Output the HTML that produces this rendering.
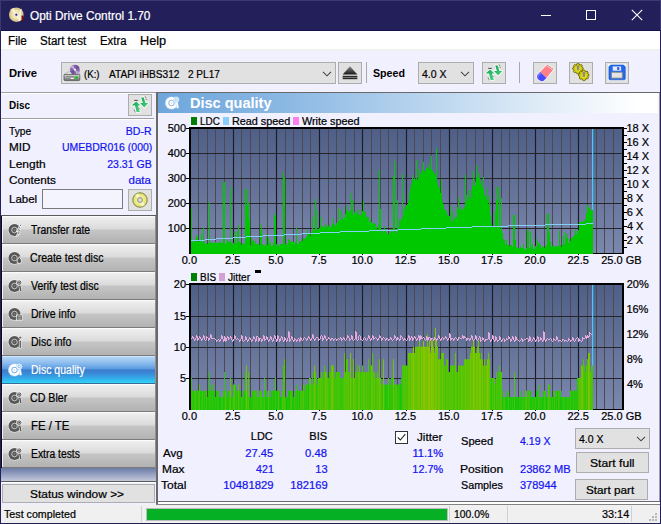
<!DOCTYPE html>
<html><head><meta charset="utf-8"><title>Opti Drive Control 1.70</title>
<style>
html,body{margin:0;padding:0;overflow:hidden;}
body{width:661px;height:524px;position:relative;overflow:hidden;background:#f0f0ff;font-family:"Liberation Sans",sans-serif;font-size:12px;}
div{box-sizing:border-box;}
svg{position:absolute;overflow:visible;}
</style></head><body>
<div style="position:absolute;left:0px;top:0px;width:661px;height:31px;background:#221f5b;"></div>
<div style="position:absolute;left:0px;top:0px;width:661px;height:1px;background:#3b3870;"></div>
<div style="position:absolute;left:0px;top:30px;width:661px;height:1px;background:#16124e;"></div>
<div style="position:absolute;left:660px;top:0px;width:1px;height:30px;background:#3b3870;"></div>
<div style="position:absolute;left:0px;top:0px;width:1px;height:31px;background:#3b3870;"></div>
<div style="position:absolute;left:0px;top:31px;width:1px;height:493px;background:#221f5b;"></div>
<div style="position:absolute;left:660px;top:31px;width:1px;height:493px;background:#221f5b;"></div>
<div style="position:absolute;left:0px;top:523px;width:661px;height:1px;background:#221f5b;"></div>
<div style="position:absolute;left:659px;top:93px;width:1px;height:412px;background:#a0a0a0;"></div>
<svg style="left:8px;top:6px" width="18" height="18" viewBox="0 0 18 18">
<defs><radialGradient id="tg" cx="50%" cy="50%" r="50%"><stop offset="0" stop-color="#fffbe0"/><stop offset="0.55" stop-color="#efe2a8"/><stop offset="1" stop-color="#cdbb82"/></radialGradient></defs>
<circle cx="8.3" cy="8.7" r="7.3" fill="url(#tg)"/>
<path d="M8.3 8.7 L2 4 A7.3 7.3 0 0 1 6 1.8 Z" fill="#fff8d8" opacity=".7"/>
<path d="M8.3 8.7 L14.5 13 A7.3 7.3 0 0 1 10.5 15.6 Z" fill="#fff8d8" opacity=".6"/>
<circle cx="8.3" cy="8.7" r="1.9" fill="#d8d8e8"/><circle cx="8.3" cy="8.7" r="1" fill="#2a2660"/>
<path d="M13.6 2.6 L12 15.3 L10.8 14.8 L12.2 4 Z" fill="#f4f4f4"/>
<rect x="13.6" y="9.6" width="1.9" height="5.6" fill="#7a0c0c"/>
</svg>
<div style="position:absolute;left:29.97px;transform-origin:0 0;top:7.77px;line-height:16px;font-size:12.3px;color:#fff;white-space:nowrap;-webkit-text-stroke:0.22px;transform:scaleX(0.9631);">Opti Drive Control 1.70</div>
<div style="position:absolute;left:541px;top:15px;width:10px;height:1px;background:#fff;"></div>
<div style="position:absolute;left:586px;top:10px;width:10px;height:10px;background:transparent;border:1px solid #fff;"></div>
<svg style="left:631px;top:9px" width="12" height="12" viewBox="0 0 12 12"><path d="M0.8 0.8 L11.2 11.2 M11.2 0.8 L0.8 11.2" stroke="#fff" stroke-width="1.1" fill="none"/></svg>
<div style="position:absolute;left:1px;top:31px;width:659px;height:18px;background:#fff;"></div>
<div style="position:absolute;left:1px;top:49px;width:659px;height:2px;background:#f0f0f0;"></div>
<div style="position:absolute;left:7.86px;transform-origin:0 0;top:32.77px;line-height:16px;font-size:12.3px;color:#000;white-space:nowrap;-webkit-text-stroke:0.22px;transform:scaleX(0.9510);">File</div>
<div style="position:absolute;left:40.08px;transform-origin:0 0;top:32.77px;line-height:16px;font-size:12.3px;color:#000;white-space:nowrap;-webkit-text-stroke:0.22px;transform:scaleX(0.9380);">Start test</div>
<div style="position:absolute;left:99.69px;transform-origin:0 0;top:32.77px;line-height:16px;font-size:12.3px;color:#000;white-space:nowrap;-webkit-text-stroke:0.22px;transform:scaleX(0.9230);">Extra</div>
<div style="position:absolute;left:139.58px;transform-origin:0 0;top:32.77px;line-height:16px;font-size:12.3px;color:#000;white-space:nowrap;-webkit-text-stroke:0.22px;transform:scaleX(1.0336);">Help</div>
<div style="position:absolute;left:8.57px;transform-origin:0 0;top:65.11px;line-height:16px;font-size:11.3px;color:#000;white-space:nowrap;font-weight:bold;transform:scaleX(0.9945);">Drive</div>
<div style="position:absolute;left:61px;top:62px;width:275px;height:22px;background:#e1e1e1;border:1px solid #adadad;"></div>
<div style="position:absolute;left:83.92px;transform-origin:0 0;top:66.11px;line-height:16px;font-size:11.3px;color:#000;white-space:nowrap;-webkit-text-stroke:0.22px;transform:scaleX(0.8553);">(K:)</div>
<div style="position:absolute;left:108.50px;transform-origin:0 0;top:66.11px;line-height:16px;font-size:11.3px;color:#000;white-space:nowrap;-webkit-text-stroke:0.22px;transform:scaleX(0.8955);">ATAPI iHBS312</div>
<div style="position:absolute;left:188.00px;transform-origin:0 0;top:66.11px;line-height:16px;font-size:11.3px;color:#000;white-space:nowrap;-webkit-text-stroke:0.22px;transform:scaleX(0.8878);">2 PL17</div>
<svg style="left:322px;top:71px" width="10" height="6" viewBox="0 0 10 6"><path d="M1 0.8 L5 4.8 L9 0.8" stroke="#444" stroke-width="1.05" fill="none"/></svg>
<svg style="left:62px;top:63px" width="20" height="20" viewBox="0 0 20 20">
<defs><linearGradient id="dg" x1="0" y1="0" x2="0" y2="1"><stop offset="0" stop-color="#d4d4d4"/><stop offset="0.5" stop-color="#a4a4a4"/><stop offset="1" stop-color="#686868"/></linearGradient></defs>
<path d="M6.3 8.8 L16.6 8.8 L17.9 11.6 L2 11.6 Z" fill="#e4e4e4" stroke="#8a8a8a" stroke-width=".5"/>
<circle cx="12.9" cy="6.7" r="4.9" fill="#8464ac"/>
<path d="M12.9 6.7 L8.6 4.4 A4.9 4.9 0 0 1 11.4 2 Z M12.9 6.7 L17.2 9 A4.9 4.9 0 0 1 14.4 11.4 Z" fill="#c8b8e4" opacity=".85"/>
<path d="M12.9 6.7 L14.6 2.1 A4.9 4.9 0 0 1 17.4 4.8 Z M12.9 6.7 L11.2 11.3 A4.9 4.9 0 0 1 8.4 8.6 Z" fill="#5c4484" opacity=".6"/>
<circle cx="12.9" cy="6.7" r="1.1" fill="#fff"/>
<rect x="2" y="11.4" width="15.8" height="6.2" rx="1" fill="url(#dg)" stroke="#4c4c4c" stroke-width=".7"/>
<rect x="4" y="13" width="8" height="1" fill="#8c8c8c"/>
<rect x="8.8" y="15" width="3" height="1" fill="#f4f4f4"/>
<path d="M14.3 12.9 v3.2 M12.7 14.5 h3.2" stroke="#18c818" stroke-width="1.3"/>
</svg>
<div style="position:absolute;left:338px;top:62px;width:24px;height:22px;background:#e1e1e1;border:1px solid #adadad;"></div>
<svg style="left:342px;top:65px" width="16" height="16" viewBox="0 0 16 16">
<defs><linearGradient id="eg" x1="0" y1="0" x2="0" y2="1"><stop offset="0" stop-color="#8a8a8a"/><stop offset="1" stop-color="#1a1a1a"/></linearGradient></defs>
<path d="M8 1.2 L15.3 9.4 L0.7 9.4 Z" fill="url(#eg)"/><rect x="0.7" y="10.8" width="14.6" height="3.4" fill="#2a2a2a"/><rect x="0.7" y="12.1" width="14.6" height="0.7" fill="#999"/></svg>
<div style="position:absolute;left:366px;top:62px;width:1px;height:21px;background:#a8a8a8;"></div>
<div style="position:absolute;left:372.71px;transform-origin:0 0;top:65.11px;line-height:16px;font-size:11.3px;color:#000;white-space:nowrap;font-weight:bold;transform:scaleX(0.9435);">Speed</div>
<div style="position:absolute;left:418px;top:62px;width:56px;height:22px;background:#e1e1e1;border:1px solid #adadad;"></div>
<div style="position:absolute;left:421.76px;transform-origin:0 0;top:66.11px;line-height:16px;font-size:11.3px;color:#000;white-space:nowrap;-webkit-text-stroke:0.22px;transform:scaleX(0.9265);">4.0 X</div>
<svg style="left:460px;top:71px" width="10" height="6" viewBox="0 0 10 6"><path d="M1 0.8 L5 4.8 L9 0.8" stroke="#444" stroke-width="1.05" fill="none"/></svg>
<div style="position:absolute;left:482px;top:62px;width:24px;height:22px;background:#e1e1e1;border:1px solid #adadad;"></div>
<svg style="left:482px;top:62px" width="24" height="22" viewBox="0 0 24 22">
<defs><linearGradient id="gaa" x1="0" y1="0" x2="1" y2="1"><stop offset="0" stop-color="#18a050"/><stop offset="1" stop-color="#48d888"/></linearGradient></defs>
<g stroke="#fff" stroke-width="1.6" stroke-linejoin="round" opacity=".95">
<path d="M8.2 7.4 L12.6 11.6 L10 11.6 L11.9 18 L8.6 18 L7 11.6 L3.5 11.6 Z" fill="#fff"/>
<path d="M13.2 3.4 L15.8 3.4 L17.5 9 L20.4 9 L16.2 13.6 L12 9 L14.9 9 Z" fill="#fff"/></g>
<path d="M8.2 7.4 L12.6 11.6 L10 11.6 L11.9 18 L8.6 18 L7 11.6 L3.5 11.6 Z" fill="url(#gaa)"/>
<path d="M13.2 3.4 L15.8 3.4 L17.5 9 L20.4 9 L16.2 13.6 L12 9 L14.9 9 Z" fill="url(#gaa)"/>
<path d="M6.2 6.4 h3.6" stroke="#333" stroke-width=".9"/>
<path d="M17.2 2.6 l.5 1.2 M18 4.8 l.4 1 M11.2 14.2 l.5 .6 M6.2 15.6 l.4 1.2 M6.9 17.4 l.5 .8" stroke="#333" stroke-width=".7"/>
</svg>
<div style="position:absolute;left:519px;top:62px;width:1px;height:21px;background:#a8a8a8;"></div>
<div style="position:absolute;left:533px;top:62px;width:24px;height:22px;background:#e1e1e1;border:1px solid #adadad;"></div>
<svg style="left:533px;top:62px" width="24" height="22" viewBox="0 0 24 22">
<path d="M14 2.6 L20.7 7.2 L13.5 16.1 L10.1 19.3 L5.3 17.6 L3.6 13.5 L7.2 10 Z" fill="#fff" stroke="#fff" stroke-width="1.4" stroke-linejoin="round" opacity=".9"/>
<path d="M14 2.8 L20.5 7.2 L13.5 15.9 L7.2 10.1 Z" fill="#ff8088"/>
<path d="M14 2.8 L20.5 7.2 L19.6 8.4 L13.2 4 Z" fill="#ffb0b4"/>
<path d="M7.2 10.1 L13.5 15.9 L10.3 19 Q7.6 19.6 5.4 17.4 Q3.4 15.2 4 13.4 Z" fill="#4848ff"/>
<path d="M7.2 10.1 L8.6 11.4 L5.6 14.6 Q5 16 5.6 17.4 Q3.4 15.2 4 13.4 Z" fill="#7070ff"/>
<path d="M14 2.8 L20.5 7.2" stroke="#555" stroke-width=".5" stroke-dasharray="1 1"/>
</svg>
<div style="position:absolute;left:569px;top:62px;width:24px;height:22px;background:#e1e1e1;border:1px solid #adadad;"></div>
<svg style="left:569px;top:62px" width="24" height="22" viewBox="0 0 24 22">
<g transform="translate(9,6.9)"><path d="M0 -5.4 L1.3 -5 L1.7 -3.6 L3.2 -4.4 L4.4 -3.4 L3.6 -2 L5 -1.4 L5.3 0.2 L3.9 .9 L4.6 2.4 L3.6 3.6 L2.2 3 L1.6 4.6 L0 5.2 L-1.4 4.6 L-2 3.2 L-3.6 3.8 L-4.6 2.6 L-3.8 1.2 L-5.2 .4 L-5.2 -1.2 L-3.8 -1.8 L-4.4 -3.4 L-3.2 -4.4 L-1.8 -3.6 L-1.4 -5 Z" fill="#d4cc10" stroke="#5e5a00" stroke-width=".8"/><circle r="2.6" fill="#e8e020"/><rect x="-1.2" y="-3.4" width="2.4" height="4.8" fill="#8c8c7c"/></g>
<g transform="translate(14.8,13.5)"><path d="M0 -5.4 L1.3 -5 L1.7 -3.6 L3.2 -4.4 L4.4 -3.4 L3.6 -2 L5 -1.4 L5.3 0.2 L3.9 .9 L4.6 2.4 L3.6 3.6 L2.2 3 L1.6 4.6 L0 5.2 L-1.4 4.6 L-2 3.2 L-3.6 3.8 L-4.6 2.6 L-3.8 1.2 L-5.2 .4 L-5.2 -1.2 L-3.8 -1.8 L-4.4 -3.4 L-3.2 -4.4 L-1.8 -3.6 L-1.4 -5 Z" fill="#d4cc10" stroke="#5e5a00" stroke-width=".8"/><circle r="2.6" fill="#e8e020"/><rect x="-1.2" y="-3.4" width="2.4" height="4.8" fill="#8c8c7c"/></g>
</svg>
<div style="position:absolute;left:605px;top:62px;width:24px;height:22px;background:#e1e1e1;border:1px solid #adadad;"></div>
<svg style="left:605px;top:62px" width="24" height="22" viewBox="0 0 24 22">
<rect x="3" y="2.2" width="18.2" height="16.4" fill="#fff" opacity=".9"/>
<path d="M5.6 3 L18.6 3 L20.3 4.8 L20.3 16.8 Q20.3 17.8 19.3 17.8 L4.9 17.8 Q3.9 17.8 3.9 16.8 L3.9 4.8 Z" fill="#2068f0"/>
<path d="M5.6 3 L18.6 3 L20.3 4.8 L20.3 16.8 Q20.3 17.8 19.3 17.8 L4.9 17.8 Q3.9 17.8 3.9 16.8 L3.9 4.8 Z" fill="none" stroke="#1450c8" stroke-width=".6"/>
<rect x="7.7" y="4.4" width="8.4" height="4.3" fill="#e6e8f4"/><rect x="12" y="5" width="2.4" height="3" rx="1" fill="#3060f0"/>
<rect x="6.4" y="10.2" width="10.9" height="5.9" fill="#e4e4e4" stroke="#8a8480" stroke-width=".9"/>
</svg>
<div style="position:absolute;left:1px;top:92px;width:153px;height:1px;background:#a0a0a0;"></div>
<div style="position:absolute;left:1px;top:93px;width:153px;height:1px;background:#fff;"></div>
<div style="position:absolute;left:154px;top:92px;width:2px;height:1px;background:#a0a0a0;"></div>
<div style="position:absolute;left:8.86px;transform-origin:0 0;top:97.11px;line-height:16px;font-size:11.3px;color:#000;white-space:nowrap;font-weight:bold;transform:scaleX(0.8773);">Disc</div>
<div style="position:absolute;left:128px;top:94px;width:24px;height:22px;background:#e1e1e1;border:1px solid #adadad;"></div>
<svg style="left:128px;top:94px" width="24" height="22" viewBox="0 0 24 22">
<defs><linearGradient id="gab" x1="0" y1="0" x2="1" y2="1"><stop offset="0" stop-color="#18a050"/><stop offset="1" stop-color="#48d888"/></linearGradient></defs>
<g stroke="#fff" stroke-width="1.6" stroke-linejoin="round" opacity=".95">
<path d="M8.2 7.4 L12.6 11.6 L10 11.6 L11.9 18 L8.6 18 L7 11.6 L3.5 11.6 Z" fill="#fff"/>
<path d="M13.2 3.4 L15.8 3.4 L17.5 9 L20.4 9 L16.2 13.6 L12 9 L14.9 9 Z" fill="#fff"/></g>
<path d="M8.2 7.4 L12.6 11.6 L10 11.6 L11.9 18 L8.6 18 L7 11.6 L3.5 11.6 Z" fill="url(#gab)"/>
<path d="M13.2 3.4 L15.8 3.4 L17.5 9 L20.4 9 L16.2 13.6 L12 9 L14.9 9 Z" fill="url(#gab)"/>
<path d="M6.2 6.4 h3.6" stroke="#333" stroke-width=".9"/>
<path d="M17.2 2.6 l.5 1.2 M18 4.8 l.4 1 M11.2 14.2 l.5 .6 M6.2 15.6 l.4 1.2 M6.9 17.4 l.5 .8" stroke="#333" stroke-width=".7"/>
</svg>
<div style="position:absolute;left:1px;top:118px;width:153px;height:1px;background:#a0a0a0;"></div>
<div style="position:absolute;left:1px;top:119px;width:153px;height:1px;background:#fff;"></div>
<div style="position:absolute;left:9.30px;transform-origin:0 0;top:123.11px;line-height:16px;font-size:11.3px;color:#000;white-space:nowrap;-webkit-text-stroke:0.22px;transform:scaleX(0.9039);">Type</div>
<div style="position:absolute;right:509.23px;transform-origin:100% 0;top:123.11px;line-height:16px;font-size:11.3px;color:#1414f0;white-space:nowrap;-webkit-text-stroke:0.22px;transform:scaleX(0.9345);">BD-R</div>
<div style="position:absolute;left:8.56px;transform-origin:0 0;top:139.11px;line-height:16px;font-size:11.3px;color:#000;white-space:nowrap;-webkit-text-stroke:0.22px;transform:scaleX(1.0381);">MID</div>
<div style="position:absolute;right:509.08px;transform-origin:100% 0;top:139.11px;line-height:16px;font-size:11.3px;color:#1414f0;white-space:nowrap;-webkit-text-stroke:0.22px;transform:scaleX(0.9288);">UMEBDR016 (000)</div>
<div style="position:absolute;left:8.54px;transform-origin:0 0;top:156.11px;line-height:16px;font-size:11.3px;color:#000;white-space:nowrap;-webkit-text-stroke:0.22px;transform:scaleX(1.0626);">Length</div>
<div style="position:absolute;right:509.14px;transform-origin:100% 0;top:156.11px;line-height:16px;font-size:11.3px;color:#1414f0;white-space:nowrap;-webkit-text-stroke:0.22px;transform:scaleX(0.9338);">23.31 GB</div>
<div style="position:absolute;left:8.91px;transform-origin:0 0;top:172.11px;line-height:16px;font-size:11.3px;color:#000;white-space:nowrap;-webkit-text-stroke:0.22px;transform:scaleX(1.0391);">Contents</div>
<div style="position:absolute;right:509.71px;transform-origin:100% 0;top:172.11px;line-height:16px;font-size:11.3px;color:#1414f0;white-space:nowrap;-webkit-text-stroke:0.22px;transform:scaleX(1.0207);">data</div>
<div style="position:absolute;left:8.58px;transform-origin:0 0;top:191.11px;line-height:16px;font-size:11.3px;color:#000;white-space:nowrap;-webkit-text-stroke:0.22px;transform:scaleX(1.0185);">Label</div>
<div style="position:absolute;left:42px;top:189px;width:81px;height:20px;background:#f4f4ff;border:1px solid #7a7a7a;"></div>
<div style="position:absolute;left:128px;top:189px;width:24px;height:22px;background:#e1e1e1;border:1px solid #adadad;"></div>
<svg style="left:132px;top:192px" width="16" height="16" viewBox="0 0 16 16">
<defs><radialGradient id="yg" cx="50%" cy="50%" r="50%"><stop offset="0.3" stop-color="#f8f8b0"/><stop offset="0.8" stop-color="#e4e478"/><stop offset="1" stop-color="#b8b850"/></radialGradient></defs>
<circle cx="8" cy="8" r="7.3" fill="url(#yg)" stroke="#7a7a3a" stroke-width=".8"/>
<path d="M8 8 L3 3.4 A7 7 0 0 1 6.4 1.2 Z M8 8 L13 12.6 A7 7 0 0 1 9.6 14.8 Z" fill="#fffff0" opacity=".65"/>
<circle cx="8" cy="8" r="2.6" fill="#c8c8b8" stroke="#888870" stroke-width=".7"/><circle cx="8" cy="8" r="1.1" fill="#e8e8e0"/></svg>
<div style="position:absolute;left:1px;top:215px;width:155px;height:1px;background:#5a5a5a;"></div>
<div style="position:absolute;left:1px;top:216px;width:1px;height:252px;background:#0c0c14;"></div>
<div style="position:absolute;left:2px;top:216px;width:153px;height:27px;background:linear-gradient(to bottom,#f6f6f6 0%,#ececec 10%,#dadada 49%,#c6c6c6 51%,#b2b2b2 100%);"></div>
<div style="position:absolute;left:2px;top:243px;width:153px;height:1px;background:#7c7c7c;"></div>
<div style="position:absolute;left:2px;top:216px;width:153px;height:1px;background:#fbfbfb;"></div>
<div style="position:absolute;left:2px;top:217px;width:1px;height:26px;background:#f2f2f2;"></div>
<svg style="left:7.5px;top:222px" width="18" height="16" viewBox="0 0 18 16"><circle cx="6.5" cy="8" r="6.7" fill="#ffffff" opacity=".5"/><circle cx="6.5" cy="8" r="6" fill="#585858"/><circle cx="6.5" cy="8" r="2.8" fill="none" stroke="#dedede" stroke-width=".8"/><circle cx="6.5" cy="8" r="0.8" fill="#dedede" opacity=".4"/><path d="M13.2 2 L9.6 8.6 L11.3 8.3 L9 14.4" stroke="#ffffff" stroke-width="2.2" fill="none" opacity=".9"/><path d="M12.9 2.6 L9.9 8.4 L11.4 8.2 L9.4 13.6" stroke="#585858" stroke-width=".9" fill="none" stroke-dasharray="1.6 1"/></svg>
<div style="position:absolute;left:31.49px;transform-origin:0 0;top:221.87px;line-height:16px;font-size:12px;color:#000;white-space:nowrap;-webkit-text-stroke:0.22px;transform:scaleX(0.8656);">Transfer rate</div>
<div style="position:absolute;left:2px;top:244px;width:153px;height:27px;background:linear-gradient(to bottom,#f6f6f6 0%,#ececec 10%,#dadada 49%,#c6c6c6 51%,#b2b2b2 100%);"></div>
<div style="position:absolute;left:2px;top:271px;width:153px;height:1px;background:#7c7c7c;"></div>
<div style="position:absolute;left:2px;top:244px;width:153px;height:1px;background:#fbfbfb;"></div>
<div style="position:absolute;left:2px;top:245px;width:1px;height:26px;background:#f2f2f2;"></div>
<svg style="left:7.5px;top:250px" width="18" height="16" viewBox="0 0 18 16"><circle cx="6.5" cy="8" r="6.7" fill="#ffffff" opacity=".5"/><circle cx="6.5" cy="8" r="6" fill="#585858"/><circle cx="6.5" cy="8" r="2.8" fill="none" stroke="#dedede" stroke-width=".8"/><circle cx="6.5" cy="8" r="0.8" fill="#dedede" opacity=".4"/><path d="M11.4 6.6 C12.6 8.8 13.6 9.8 13.6 11.2 A2.3 2.3 0 0 1 9 11.2 C9 9.8 10.2 8.8 11.4 6.6 Z" fill="#585858" stroke="#ffffff" stroke-width=".8"/></svg>
<div style="position:absolute;left:30.17px;transform-origin:0 0;top:249.87px;line-height:16px;font-size:12px;color:#000;white-space:nowrap;-webkit-text-stroke:0.22px;transform:scaleX(0.8815);">Create test disc</div>
<div style="position:absolute;left:2px;top:272px;width:153px;height:27px;background:linear-gradient(to bottom,#f6f6f6 0%,#ececec 10%,#dadada 49%,#c6c6c6 51%,#b2b2b2 100%);"></div>
<div style="position:absolute;left:2px;top:299px;width:153px;height:1px;background:#7c7c7c;"></div>
<div style="position:absolute;left:2px;top:272px;width:153px;height:1px;background:#fbfbfb;"></div>
<div style="position:absolute;left:2px;top:273px;width:1px;height:26px;background:#f2f2f2;"></div>
<svg style="left:7.5px;top:278px" width="18" height="16" viewBox="0 0 18 16"><circle cx="6.5" cy="8" r="6.7" fill="#ffffff" opacity=".5"/><circle cx="6.5" cy="8" r="6" fill="#585858"/><circle cx="6.5" cy="8" r="2.8" fill="none" stroke="#dedede" stroke-width=".8"/><circle cx="6.5" cy="8" r="0.8" fill="#dedede" opacity=".4"/><path d="M11.6 7 L12.8 13.2" stroke="#ffffff" stroke-width="2.6" opacity=".9"/><path d="M11.6 7 L12.8 13" stroke="#585858" stroke-width="1.5"/><circle cx="11.2" cy="4.6" r="2.7" fill="#585858" stroke="#ffffff" stroke-width=".9"/><circle cx="11.2" cy="4.6" r="1.2" fill="none" stroke="#dedede" stroke-width=".6"/></svg>
<div style="position:absolute;left:31.17px;transform-origin:0 0;top:277.87px;line-height:16px;font-size:12px;color:#000;white-space:nowrap;-webkit-text-stroke:0.22px;transform:scaleX(0.8749);">Verify test disc</div>
<div style="position:absolute;left:2px;top:300px;width:153px;height:27px;background:linear-gradient(to bottom,#f6f6f6 0%,#ececec 10%,#dadada 49%,#c6c6c6 51%,#b2b2b2 100%);"></div>
<div style="position:absolute;left:2px;top:327px;width:153px;height:1px;background:#7c7c7c;"></div>
<div style="position:absolute;left:2px;top:300px;width:153px;height:1px;background:#fbfbfb;"></div>
<div style="position:absolute;left:2px;top:301px;width:1px;height:26px;background:#f2f2f2;"></div>
<svg style="left:7.5px;top:306px" width="18" height="16" viewBox="0 0 18 16"><circle cx="6.5" cy="8" r="6.7" fill="#ffffff" opacity=".5"/><circle cx="6.5" cy="8" r="6" fill="#585858"/><circle cx="6.5" cy="8" r="2.8" fill="none" stroke="#dedede" stroke-width=".8"/><circle cx="6.5" cy="8" r="0.8" fill="#dedede" opacity=".4"/><rect x="8.6" y="9" width="5.6" height="5.2" fill="#585858" stroke="#ffffff" stroke-width=".7"/><path d="M9.6 10.6 h3.6 M9.6 12 h3.6 M9.6 13.2 h3.6" stroke="#dedede" stroke-width=".6"/></svg>
<div style="position:absolute;left:30.86px;transform-origin:0 0;top:305.87px;line-height:16px;font-size:12px;color:#000;white-space:nowrap;-webkit-text-stroke:0.22px;transform:scaleX(0.8795);">Drive info</div>
<div style="position:absolute;left:2px;top:328px;width:153px;height:27px;background:linear-gradient(to bottom,#f6f6f6 0%,#ececec 10%,#dadada 49%,#c6c6c6 51%,#b2b2b2 100%);"></div>
<div style="position:absolute;left:2px;top:355px;width:153px;height:1px;background:#7c7c7c;"></div>
<div style="position:absolute;left:2px;top:328px;width:153px;height:1px;background:#fbfbfb;"></div>
<div style="position:absolute;left:2px;top:329px;width:1px;height:26px;background:#f2f2f2;"></div>
<svg style="left:7.5px;top:334px" width="18" height="16" viewBox="0 0 18 16"><circle cx="6.5" cy="8" r="6.7" fill="#ffffff" opacity=".5"/><circle cx="6.5" cy="8" r="6" fill="#585858"/><circle cx="6.5" cy="8" r="2.8" fill="none" stroke="#dedede" stroke-width=".8"/><circle cx="6.5" cy="8" r="0.8" fill="#dedede" opacity=".4"/><rect x="11.2" y="6.2" width="2" height="8" fill="#585858" stroke="#ffffff" stroke-width=".6"/><circle cx="12.2" cy="3.6" r="1.3" fill="#585858" stroke="#ffffff" stroke-width=".6"/></svg>
<div style="position:absolute;left:30.86px;transform-origin:0 0;top:333.87px;line-height:16px;font-size:12px;color:#000;white-space:nowrap;-webkit-text-stroke:0.22px;transform:scaleX(0.8777);">Disc info</div>
<div style="position:absolute;left:2px;top:356px;width:153px;height:27px;background:linear-gradient(to bottom,#dceeff 0%,#b0d4f6 5%,#8ebeee 25%,#5e9ee2 46%,#3c7ccc 52%,#3a8ad8 65%,#34b0ec 85%,#30d4fa 100%);"></div>
<div style="position:absolute;left:2px;top:383px;width:153px;height:1px;background:#3c6c98;"></div>
<svg style="left:7.5px;top:362px" width="18" height="16" viewBox="0 0 18 16"><circle cx="6.5" cy="8" r="6.7" fill="#bfe0ff" opacity=".5"/><circle cx="6.5" cy="8" r="6" fill="#fff"/><circle cx="6.5" cy="8" r="2.8" fill="none" stroke="#4a94e2" stroke-width=".8"/><circle cx="6.5" cy="8" r="0.8" fill="#4a94e2" opacity=".4"/><path d="M11.6 7 L12.8 13.2" stroke="#bfe0ff" stroke-width="2.6" opacity=".9"/><path d="M11.6 7 L12.8 13" stroke="#fff" stroke-width="1.5"/><circle cx="11.2" cy="4.6" r="2.7" fill="#fff" stroke="#bfe0ff" stroke-width=".9"/><circle cx="11.2" cy="4.6" r="1.2" fill="none" stroke="#4a94e2" stroke-width=".6"/></svg>
<div style="position:absolute;left:30.86px;transform-origin:0 0;top:361.87px;line-height:16px;font-size:12px;color:#fff;white-space:nowrap;-webkit-text-stroke:0.22px;transform:scaleX(0.8760);">Disc quality</div>
<div style="position:absolute;left:2px;top:384px;width:153px;height:27px;background:linear-gradient(to bottom,#f6f6f6 0%,#ececec 10%,#dadada 49%,#c6c6c6 51%,#b2b2b2 100%);"></div>
<div style="position:absolute;left:2px;top:411px;width:153px;height:1px;background:#7c7c7c;"></div>
<div style="position:absolute;left:2px;top:384px;width:153px;height:1px;background:#fbfbfb;"></div>
<div style="position:absolute;left:2px;top:385px;width:1px;height:26px;background:#f2f2f2;"></div>
<svg style="left:7.5px;top:390px" width="18" height="16" viewBox="0 0 18 16"><circle cx="6.5" cy="8" r="6.7" fill="#ffffff" opacity=".5"/><circle cx="6.5" cy="8" r="6" fill="#585858"/><circle cx="6.5" cy="8" r="2.8" fill="none" stroke="#dedede" stroke-width=".8"/><circle cx="6.5" cy="8" r="0.8" fill="#dedede" opacity=".4"/><path d="M11.6 7 L12.8 13.2" stroke="#ffffff" stroke-width="2.6" opacity=".9"/><path d="M11.6 7 L12.8 13" stroke="#585858" stroke-width="1.5"/><circle cx="11.2" cy="4.6" r="2.7" fill="#585858" stroke="#ffffff" stroke-width=".9"/><circle cx="11.2" cy="4.6" r="1.2" fill="none" stroke="#dedede" stroke-width=".6"/></svg>
<div style="position:absolute;left:29.87px;transform-origin:0 0;top:389.87px;line-height:16px;font-size:12px;color:#000;white-space:nowrap;-webkit-text-stroke:0.22px;transform:scaleX(0.8879);">CD Bler</div>
<div style="position:absolute;left:2px;top:412px;width:153px;height:27px;background:linear-gradient(to bottom,#f6f6f6 0%,#ececec 10%,#dadada 49%,#c6c6c6 51%,#b2b2b2 100%);"></div>
<div style="position:absolute;left:2px;top:439px;width:153px;height:1px;background:#7c7c7c;"></div>
<div style="position:absolute;left:2px;top:412px;width:153px;height:1px;background:#fbfbfb;"></div>
<div style="position:absolute;left:2px;top:413px;width:1px;height:26px;background:#f2f2f2;"></div>
<svg style="left:7.5px;top:418px" width="18" height="16" viewBox="0 0 18 16"><circle cx="6.5" cy="8" r="6.7" fill="#ffffff" opacity=".5"/><circle cx="6.5" cy="8" r="6" fill="#585858"/><circle cx="6.5" cy="8" r="2.8" fill="none" stroke="#dedede" stroke-width=".8"/><circle cx="6.5" cy="8" r="0.8" fill="#dedede" opacity=".4"/><path d="M11.6 7 L12.8 13.2" stroke="#ffffff" stroke-width="2.6" opacity=".9"/><path d="M11.6 7 L12.8 13" stroke="#585858" stroke-width="1.5"/><circle cx="11.2" cy="4.6" r="2.7" fill="#585858" stroke="#ffffff" stroke-width=".9"/><circle cx="11.2" cy="4.6" r="1.2" fill="none" stroke="#dedede" stroke-width=".6"/></svg>
<div style="position:absolute;left:30.79px;transform-origin:0 0;top:417.87px;line-height:16px;font-size:12px;color:#000;white-space:nowrap;-webkit-text-stroke:0.22px;transform:scaleX(0.9462);">FE / TE</div>
<div style="position:absolute;left:2px;top:440px;width:153px;height:27px;background:linear-gradient(to bottom,#f6f6f6 0%,#ececec 10%,#dadada 49%,#c6c6c6 51%,#b2b2b2 100%);"></div>
<div style="position:absolute;left:2px;top:467px;width:153px;height:1px;background:#7c7c7c;"></div>
<div style="position:absolute;left:2px;top:440px;width:153px;height:1px;background:#fbfbfb;"></div>
<div style="position:absolute;left:2px;top:441px;width:1px;height:26px;background:#f2f2f2;"></div>
<svg style="left:7.5px;top:446px" width="18" height="16" viewBox="0 0 18 16"><circle cx="6.5" cy="8" r="6.7" fill="#ffffff" opacity=".5"/><circle cx="6.5" cy="8" r="6" fill="#585858"/><circle cx="6.5" cy="8" r="2.8" fill="none" stroke="#dedede" stroke-width=".8"/><circle cx="6.5" cy="8" r="0.8" fill="#dedede" opacity=".4"/><path d="M11.6 7 L12.8 13.2" stroke="#ffffff" stroke-width="2.6" opacity=".9"/><path d="M11.6 7 L12.8 13" stroke="#585858" stroke-width="1.5"/><circle cx="11.2" cy="4.6" r="2.7" fill="#585858" stroke="#ffffff" stroke-width=".9"/><circle cx="11.2" cy="4.6" r="1.2" fill="none" stroke="#dedede" stroke-width=".6"/></svg>
<div style="position:absolute;left:30.87px;transform-origin:0 0;top:445.87px;line-height:16px;font-size:12px;color:#000;white-space:nowrap;-webkit-text-stroke:0.22px;transform:scaleX(0.8623);">Extra tests</div>
<div style="position:absolute;left:155px;top:216px;width:1px;height:252px;background:#909090;"></div>
<div style="position:absolute;left:1px;top:468px;width:155px;height:13px;background:linear-gradient(to bottom,#6c7ca6 0%,#8e9abc 40%,#c4c8dc 100%);"></div>
<div style="position:absolute;left:1px;top:481px;width:155px;height:1px;background:#5a5a5a;"></div>
<div style="position:absolute;left:1px;top:482px;width:155px;height:1px;background:#fff;"></div>
<div style="position:absolute;left:2px;top:484px;width:153px;height:19px;background:#e1e1e1;border:1px solid #adadad;"></div>
<div style="position:absolute;left:29.96px;transform-origin:0 0;top:485.91px;line-height:16px;font-size:11.3px;color:#000;white-space:nowrap;-webkit-text-stroke:0.22px;transform:scaleX(1.0548);">Status window &gt;&gt;</div>
<div style="position:absolute;left:1px;top:505px;width:659px;height:18px;background:#f0f0f0;"></div>
<div style="position:absolute;left:3.79px;transform-origin:0 0;top:506.11px;line-height:16px;font-size:11.3px;color:#000;white-space:nowrap;-webkit-text-stroke:0.22px;transform:scaleX(0.9459);">Test completed</div>
<div style="position:absolute;left:141px;top:506px;width:1px;height:16px;background:#d0d0d0;"></div>
<div style="position:absolute;left:146px;top:508px;width:302px;height:13px;background:#e6e6e6;border:1px solid #bcbcbc;"></div>
<div style="position:absolute;left:147px;top:509px;width:300px;height:11px;background:#06b025;"></div>
<div style="position:absolute;left:453.72px;transform-origin:0 0;top:506.11px;line-height:16px;font-size:11.3px;color:#000;white-space:nowrap;-webkit-text-stroke:0.22px;transform:scaleX(0.9166);">100.0%</div>
<div style="position:absolute;left:507px;top:506px;width:1px;height:16px;background:#d0d0d0;"></div>
<div style="position:absolute;left:449px;top:506px;width:1px;height:16px;background:#d0d0d0;"></div>
<div style="position:absolute;left:602.09px;transform-origin:0 0;top:506.11px;line-height:16px;font-size:11.3px;color:#000;white-space:nowrap;-webkit-text-stroke:0.22px;transform:scaleX(0.9621);">33:14</div>
<div style="position:absolute;left:631px;top:506px;width:1px;height:16px;background:#d0d0d0;"></div>
<div style="position:absolute;left:655px;top:513px;width:2px;height:2px;background:#b8b8b8;"></div>
<div style="position:absolute;left:652px;top:516px;width:2px;height:2px;background:#b8b8b8;"></div>
<div style="position:absolute;left:655px;top:516px;width:2px;height:2px;background:#b8b8b8;"></div>
<div style="position:absolute;left:649px;top:519px;width:2px;height:2px;background:#b8b8b8;"></div>
<div style="position:absolute;left:652px;top:519px;width:2px;height:2px;background:#b8b8b8;"></div>
<div style="position:absolute;left:655px;top:519px;width:2px;height:2px;background:#b8b8b8;"></div>
<div style="position:absolute;left:156px;top:92px;width:504px;height:1px;background:#696969;"></div>
<div style="position:absolute;left:156px;top:92px;width:2px;height:413px;background:#696969;"></div>
<div style="position:absolute;left:158px;top:501px;width:502px;height:1px;background:#696969;"></div>
<div style="position:absolute;left:158px;top:502px;width:502px;height:2px;background:#fff;"></div>
<div style="position:absolute;left:156px;top:504px;width:504px;height:1px;background:#828282;"></div>
<div style="position:absolute;left:158px;top:93px;width:500px;height:20px;background:linear-gradient(to right,#6ea6dc 0%,#8ab8e3 25%,#ffffff 96%);"></div>
<svg style="left:165px;top:95px" width="18" height="16" viewBox="0 0 18 16"><circle cx="6.5" cy="8" r="6.7" fill="#bfe0ff" opacity=".5"/><circle cx="6.5" cy="8" r="6" fill="#fff"/><circle cx="6.5" cy="8" r="2.8" fill="none" stroke="#6ea5dc" stroke-width=".8"/><circle cx="6.5" cy="8" r="0.8" fill="#6ea5dc" opacity=".4"/><path d="M11.6 7 L12.8 13.2" stroke="#bfe0ff" stroke-width="2.6" opacity=".9"/><path d="M11.6 7 L12.8 13" stroke="#fff" stroke-width="1.5"/><circle cx="11.2" cy="4.6" r="2.7" fill="#fff" stroke="#bfe0ff" stroke-width=".9"/><circle cx="11.2" cy="4.6" r="1.2" fill="none" stroke="#6ea5dc" stroke-width=".6"/></svg>
<div style="position:absolute;left:189.96px;transform-origin:0 0;top:94.98px;line-height:16px;font-size:14px;color:#fff;white-space:nowrap;font-weight:bold;transform:scaleX(1.0370);">Disc quality</div>
<svg style="left:0;top:0" width="661" height="524" viewBox="0 0 661 524">
<defs><linearGradient id="pg1" x1="0" y1="0" x2="0" y2="1"><stop offset="0" stop-color="#4e5e86"/><stop offset="1" stop-color="#7c88ae"/></linearGradient></defs>
<rect x="189" y="127" width="435" height="127" fill="url(#pg1)"/>
<rect x="198" y="128" width="1" height="125" fill="#4a4a4f"/>
<rect x="207" y="128" width="1" height="125" fill="#4a4a4f"/>
<rect x="215" y="128" width="1" height="125" fill="#4a4a4f"/>
<rect x="224" y="128" width="1" height="125" fill="#4a4a4f"/>
<rect x="232.92" y="128" width="1.16" height="125" fill="#1c1c22"/>
<rect x="241" y="128" width="1" height="125" fill="#4a4a4f"/>
<rect x="250" y="128" width="1" height="125" fill="#4a4a4f"/>
<rect x="259" y="128" width="1" height="125" fill="#4a4a4f"/>
<rect x="267" y="128" width="1" height="125" fill="#4a4a4f"/>
<rect x="275.92" y="128" width="1.16" height="125" fill="#1c1c22"/>
<rect x="285" y="128" width="1" height="125" fill="#4a4a4f"/>
<rect x="293" y="128" width="1" height="125" fill="#4a4a4f"/>
<rect x="302" y="128" width="1" height="125" fill="#4a4a4f"/>
<rect x="310" y="128" width="1" height="125" fill="#4a4a4f"/>
<rect x="318.92" y="128" width="1.16" height="125" fill="#1c1c22"/>
<rect x="328" y="128" width="1" height="125" fill="#4a4a4f"/>
<rect x="336" y="128" width="1" height="125" fill="#4a4a4f"/>
<rect x="345" y="128" width="1" height="125" fill="#4a4a4f"/>
<rect x="354" y="128" width="1" height="125" fill="#4a4a4f"/>
<rect x="361.92" y="128" width="1.16" height="125" fill="#1c1c22"/>
<rect x="371" y="128" width="1" height="125" fill="#4a4a4f"/>
<rect x="380" y="128" width="1" height="125" fill="#4a4a4f"/>
<rect x="388" y="128" width="1" height="125" fill="#4a4a4f"/>
<rect x="397" y="128" width="1" height="125" fill="#4a4a4f"/>
<rect x="405.92" y="128" width="1.16" height="125" fill="#1c1c22"/>
<rect x="414" y="128" width="1" height="125" fill="#4a4a4f"/>
<rect x="423" y="128" width="1" height="125" fill="#4a4a4f"/>
<rect x="431" y="128" width="1" height="125" fill="#4a4a4f"/>
<rect x="440" y="128" width="1" height="125" fill="#4a4a4f"/>
<rect x="448.92" y="128" width="1.16" height="125" fill="#1c1c22"/>
<rect x="457" y="128" width="1" height="125" fill="#4a4a4f"/>
<rect x="466" y="128" width="1" height="125" fill="#4a4a4f"/>
<rect x="475" y="128" width="1" height="125" fill="#4a4a4f"/>
<rect x="483" y="128" width="1" height="125" fill="#4a4a4f"/>
<rect x="491.92" y="128" width="1.16" height="125" fill="#1c1c22"/>
<rect x="501" y="128" width="1" height="125" fill="#4a4a4f"/>
<rect x="509" y="128" width="1" height="125" fill="#4a4a4f"/>
<rect x="518" y="128" width="1" height="125" fill="#4a4a4f"/>
<rect x="526" y="128" width="1" height="125" fill="#4a4a4f"/>
<rect x="534.92" y="128" width="1.16" height="125" fill="#1c1c22"/>
<rect x="544" y="128" width="1" height="125" fill="#4a4a4f"/>
<rect x="552" y="128" width="1" height="125" fill="#4a4a4f"/>
<rect x="561" y="128" width="1" height="125" fill="#4a4a4f"/>
<rect x="570" y="128" width="1" height="125" fill="#4a4a4f"/>
<rect x="577.92" y="128" width="1.16" height="125" fill="#1c1c22"/>
<rect x="587" y="128" width="1" height="125" fill="#4a4a4f"/>
<rect x="596" y="128" width="1" height="125" fill="#4a4a4f"/>
<rect x="604" y="128" width="1" height="125" fill="#4a4a4f"/>
<rect x="613" y="128" width="1" height="125" fill="#4a4a4f"/>
<rect x="190" y="153" width="433" height="1" fill="#25252b"/>
<rect x="190" y="178" width="433" height="1" fill="#25252b"/>
<rect x="190" y="203" width="433" height="1" fill="#25252b"/>
<rect x="190" y="228" width="433" height="1" fill="#25252b"/>
<rect x="189" y="253" width="435" height="1" fill="#000"/>
<rect x="592" y="129" width="1.2" height="95" fill="#44ccf8"/>
<path d="M191 254V208h1V254zM192 254V240h1V254zM193 254V242h1V254zM194 254V239h1V254zM195 254V241h1V254zM196 254V235h1V254zM197 254V237h1V254zM198 254V242h1V254zM199 254V241h1V254zM200 254V241h1V254zM201 254V234h1V254zM202 254V242h1V254zM203 254V228h1V254zM204 254V241h1V254zM205 254V244h1V254zM206 254V243h1V254zM207 254V244h1V254zM208 254V243h1V254zM209 254V202h1V254zM210 254V242h1V254zM211 254V243h1V254zM212 254V243h1V254zM213 254V243h1V254zM214 254V243h1V254zM215 254V242h1V254zM216 254V243h1V254zM217 254V243h1V254zM218 254V243h1V254zM219 254V241h1V254zM220 254V243h1V254zM221 254V242h1V254zM222 254V243h1V254zM223 254V182h1V254zM224 254V182h1V254zM225 254V244h1V254zM226 254V243h1V254zM227 254V240h1V254zM228 254V241h1V254zM229 254V242h1V254zM230 254V187h1V254zM231 254V243h1V254zM232 254V245h1V254zM233 254V243h1V254zM234 254V243h1V254zM235 254V232h1V254zM236 254V243h1V254zM237 254V231h1V254zM238 254V225h1V254zM239 254V242h1V254zM240 254V242h1V254zM241 254V245h1V254zM242 254V244h1V254zM243 254V243h1V254zM244 254V244h1V254zM245 254V189h1V254zM246 254V206h1V254zM247 254V189h1V254zM248 254V202h1V254zM249 254V219h1V254zM250 254V245h1V254zM251 254V236h1V254zM252 254V241h1V254zM253 254V240h1V254zM254 254V244h1V254zM255 254V241h1V254zM256 254V244h1V254zM257 254V244h1V254zM258 254V244h1V254zM259 254V245h1V254zM260 254V230h1V254zM261 254V224h1V254zM262 254V244h1V254zM263 254V245h1V254zM264 254V246h1V254zM265 254V244h1V254zM266 254V234h1V254zM267 254V245h1V254zM268 254V238h1V254zM269 254V244h1V254zM270 254V242h1V254zM271 254V246h1V254zM272 254V246h1V254zM273 254V243h1V254zM274 254V216h1V254zM275 254V213h1V254zM276 254V244h1V254zM277 254V246h1V254zM278 254V244h1V254zM279 254V246h1V254zM280 254V244h1V254zM281 254V244h1V254zM282 254V244h1V254zM283 254V172h1V254zM284 254V178h1V254zM285 254V244h1V254zM286 254V243h1V254zM287 254V245h1V254zM288 254V239h1V254zM289 254V240h1V254zM290 254V242h1V254zM291 254V242h1V254zM292 254V241h1V254zM293 254V242h1V254zM294 254V243h1V254zM295 254V242h1V254zM296 254V228h1V254zM297 254V244h1V254zM298 254V244h1V254zM299 254V241h1V254zM300 254V241h1V254zM301 254V241h1V254zM302 254V241h1V254zM303 254V238h1V254zM304 254V239h1V254zM305 254V238h1V254zM306 254V237h1V254zM307 254V230h1V254zM308 254V234h1V254zM309 254V234h1V254zM310 254V236h1V254zM311 254V232h1V254zM312 254V217h1V254zM313 254V231h1V254zM314 254V230h1V254zM315 254V199h1V254zM316 254V210h1V254zM317 254V230h1V254zM318 254V229h1V254zM319 254V228h1V254zM320 254V217h1V254zM321 254V227h1V254zM322 254V226h1V254zM323 254V227h1V254zM324 254V228h1V254zM325 254V224h1V254zM326 254V227h1V254zM327 254V225h1V254zM328 254V226h1V254zM329 254V225h1V254zM330 254V228h1V254zM331 254V226h1V254zM332 254V224h1V254zM333 254V218h1V254zM334 254V224h1V254zM335 254V226h1V254zM336 254V223h1V254zM337 254V223h1V254zM338 254V208h1V254zM339 254V221h1V254zM340 254V220h1V254zM341 254V210h1V254zM342 254V217h1V254zM343 254V220h1V254zM344 254V218h1V254zM345 254V214h1V254zM346 254V206h1V254zM347 254V210h1V254zM348 254V212h1V254zM349 254V211h1V254zM350 254V211h1V254zM351 254V193h1V254zM352 254V200h1V254zM353 254V215h1V254zM354 254V212h1V254zM355 254V213h1V254zM356 254V214h1V254zM357 254V210h1V254zM358 254V210h1V254zM359 254V215h1V254zM360 254V214h1V254zM361 254V216h1V254zM362 254V211h1V254zM363 254V201h1V254zM364 254V211h1V254zM365 254V213h1V254zM366 254V217h1V254zM367 254V217h1V254zM368 254V217h1V254zM369 254V222h1V254zM370 254V220h1V254zM371 254V222h1V254zM372 254V224h1V254zM373 254V223h1V254zM374 254V223h1V254zM375 254V224h1V254zM376 254V227h1V254zM377 254V230h1V254zM378 254V225h1V254zM379 254V170h1V254zM380 254V209h1V254zM381 254V230h1V254zM382 254V231h1V254zM383 254V233h1V254zM384 254V226h1V254zM385 254V230h1V254zM386 254V232h1V254zM387 254V234h1V254zM388 254V234h1V254zM389 254V233h1V254zM390 254V229h1V254zM391 254V232h1V254zM392 254V232h1V254zM393 254V176h1V254zM394 254V161h1V254zM395 254V231h1V254zM396 254V233h1V254zM397 254V200h1V254zM398 254V227h1V254zM399 254V219h1V254zM400 254V221h1V254zM401 254V218h1V254zM402 254V174h1V254zM403 254V217h1V254zM404 254V210h1V254zM405 254V207h1V254zM406 254V205h1V254zM407 254V205h1V254zM408 254V201h1V254zM409 254V193h1V254zM410 254V188h1V254zM411 254V184h1V254zM412 254V175h1V254zM413 254V180h1V254zM414 254V178h1V254zM415 254V180h1V254zM416 254V160h1V254zM417 254V180h1V254zM418 254V178h1V254zM419 254V169h1V254zM420 254V174h1V254zM421 254V172h1V254zM422 254V170h1V254zM423 254V162h1V254zM424 254V171h1V254zM425 254V171h1V254zM426 254V168h1V254zM427 254V167h1V254zM428 254V169h1V254zM429 254V164h1V254zM430 254V169h1V254zM431 254V156h1V254zM432 254V170h1V254zM433 254V172h1V254zM434 254V173h1V254zM435 254V175h1V254zM436 254V148h1V254zM437 254V183h1V254zM438 254V188h1V254zM439 254V187h1V254zM440 254V193h1V254zM441 254V180h1V254zM442 254V201h1V254zM443 254V204h1V254zM444 254V210h1V254zM445 254V210h1V254zM446 254V211h1V254zM447 254V215h1V254zM448 254V216h1V254zM449 254V216h1V254zM450 254V206h1V254zM451 254V221h1V254zM452 254V211h1V254zM453 254V221h1V254zM454 254V219h1V254zM455 254V217h1V254zM456 254V217h1V254zM457 254V207h1V254zM458 254V197h1V254zM459 254V209h1V254zM460 254V207h1V254zM461 254V210h1V254zM462 254V208h1V254zM463 254V210h1V254zM464 254V207h1V254zM465 254V175h1V254zM466 254V195h1V254zM467 254V201h1V254zM468 254V199h1V254zM469 254V189h1V254zM470 254V198h1V254zM471 254V191h1V254zM472 254V186h1V254zM473 254V171h1V254zM474 254V186h1V254zM475 254V182h1V254zM476 254V165h1V254zM477 254V177h1V254zM478 254V173h1V254zM479 254V178h1V254zM480 254V181h1V254zM481 254V185h1V254zM482 254V189h1V254zM483 254V177h1V254zM484 254V195h1V254zM485 254V196h1V254zM486 254V188h1V254zM487 254V200h1V254zM488 254V205h1V254zM489 254V196h1V254zM490 254V215h1V254zM491 254V223h1V254zM492 254V226h1V254zM493 254V226h1V254zM494 254V228h1V254zM495 254V211h1V254zM496 254V187h1V254zM497 254V200h1V254zM498 254V227h1V254zM499 254V187h1V254zM500 254V230h1V254zM501 254V198h1V254zM502 254V233h1V254zM503 254V239h1V254zM504 254V240h1V254zM505 254V244h1V254zM506 254V240h1V254zM507 254V245h1V254zM508 254V245h1V254zM509 254V246h1V254zM510 254V245h1V254zM511 254V245h1V254zM512 254V247h1V254zM513 254V215h1V254zM514 254V215h1V254zM515 254V240h1V254zM516 254V247h1V254zM517 254V248h1V254zM518 254V248h1V254zM519 254V248h1V254zM520 254V246h1V254zM521 254V248h1V254zM522 254V248h1V254zM523 254V244h1V254zM524 254V250h1V254zM525 254V249h1V254zM526 254V248h1V254zM527 254V230h1V254zM528 254V230h1V254zM529 254V248h1V254zM530 254V232h1V254zM531 254V247h1V254zM532 254V244h1V254zM533 254V249h1V254zM534 254V249h1V254zM535 254V246h1V254zM536 254V247h1V254zM537 254V239h1V254zM538 254V244h1V254zM539 254V242h1V254zM540 254V245h1V254zM541 254V248h1V254zM542 254V246h1V254zM543 254V247h1V254zM544 254V248h1V254zM545 254V246h1V254zM546 254V245h1V254zM547 254V214h1V254zM548 254V214h1V254zM549 254V233h1V254zM550 254V242h1V254zM551 254V247h1V254zM552 254V246h1V254zM553 254V245h1V254zM554 254V247h1V254zM555 254V246h1V254zM556 254V246h1V254zM557 254V246h1V254zM558 254V246h1V254zM559 254V231h1V254zM560 254V245h1V254zM561 254V247h1V254zM562 254V245h1V254zM563 254V236h1V254zM564 254V244h1V254zM565 254V232h1V254zM566 254V238h1V254zM567 254V234h1V254zM568 254V243h1V254zM569 254V239h1V254zM570 254V241h1V254zM571 254V238h1V254zM572 254V237h1V254zM573 254V237h1V254zM574 254V235h1V254zM575 254V230h1V254zM576 254V234h1V254zM577 254V231h1V254zM578 254V230h1V254zM579 254V222h1V254zM580 254V222h1V254zM581 254V222h1V254zM582 254V222h1V254zM583 254V221h1V254zM584 254V221h1V254zM585 254V219h1V254zM586 254V213h1V254zM587 254V205h1V254zM588 254V207h1V254zM589 254V208h1V254zM590 254V210h1V254zM591 254V210h1V254zM592 254V210h1V254z" fill="#00c800"/>
<path d="M191 240h14v1h-14zM205 239h11v1h-11zM216 238h17v1h-17zM233 237h13v1h-13zM246 236h17v1h-17zM263 235h21v1h-21zM284 234h18v1h-18zM302 233h18v1h-18zM320 232h20v1h-20zM340 231h29v1h-29zM369 230h29v1h-29zM398 229h23v1h-23zM421 228h25v1h-25zM446 227h26v1h-26zM472 226h36v1h-36zM508 225h37v1h-37zM545 224h41v1h-41zM586 223h7v1h-7z" fill="#82d0f8"/>
<rect x="189" y="127" width="2" height="127" fill="#000"/>
<rect x="622" y="127" width="2" height="127" fill="#000"/>
<rect x="189" y="127" width="435" height="2" fill="#000"/>
<rect x="186" y="128" width="3" height="1" fill="#000"/>
<rect x="186" y="153" width="3" height="1" fill="#000"/>
<rect x="186" y="178" width="3" height="1" fill="#000"/>
<rect x="186" y="203" width="3" height="1" fill="#000"/>
<rect x="186" y="228" width="3" height="1" fill="#000"/>
<rect x="624" y="128" width="3" height="1" fill="#000"/>
<rect x="624" y="135" width="3" height="1" fill="#000"/>
<rect x="624" y="142" width="3" height="1" fill="#000"/>
<rect x="624" y="149" width="3" height="1" fill="#000"/>
<rect x="624" y="156" width="3" height="1" fill="#000"/>
<rect x="624" y="163" width="3" height="1" fill="#000"/>
<rect x="624" y="170" width="3" height="1" fill="#000"/>
<rect x="624" y="177" width="3" height="1" fill="#000"/>
<rect x="624" y="184" width="3" height="1" fill="#000"/>
<rect x="624" y="191" width="3" height="1" fill="#000"/>
<rect x="624" y="198" width="3" height="1" fill="#000"/>
<rect x="624" y="205" width="3" height="1" fill="#000"/>
<rect x="624" y="212" width="3" height="1" fill="#000"/>
<rect x="624" y="219" width="3" height="1" fill="#000"/>
<rect x="624" y="226" width="3" height="1" fill="#000"/>
<rect x="624" y="233" width="3" height="1" fill="#000"/>
<rect x="624" y="240" width="3" height="1" fill="#000"/>
<rect x="624" y="247" width="3" height="1" fill="#000"/>
<rect x="233" y="254" width="1" height="1" fill="#000"/>
<rect x="276" y="254" width="1" height="1" fill="#000"/>
<rect x="319" y="254" width="1" height="1" fill="#000"/>
<rect x="362" y="254" width="1" height="1" fill="#000"/>
<rect x="406" y="254" width="1" height="1" fill="#000"/>
<rect x="449" y="254" width="1" height="1" fill="#000"/>
<rect x="492" y="254" width="1" height="1" fill="#000"/>
<rect x="535" y="254" width="1" height="1" fill="#000"/>
<rect x="578" y="254" width="1" height="1" fill="#000"/>
</svg>
<div style="position:absolute;right:474.98px;transform-origin:100% 0;top:120.22px;line-height:16px;font-size:11px;color:#000;white-space:nowrap;-webkit-text-stroke:0.22px;">500</div>
<div style="position:absolute;right:474.98px;transform-origin:100% 0;top:145.22px;line-height:16px;font-size:11px;color:#000;white-space:nowrap;-webkit-text-stroke:0.22px;">400</div>
<div style="position:absolute;right:474.98px;transform-origin:100% 0;top:170.22px;line-height:16px;font-size:11px;color:#000;white-space:nowrap;-webkit-text-stroke:0.22px;">300</div>
<div style="position:absolute;right:474.98px;transform-origin:100% 0;top:195.22px;line-height:16px;font-size:11px;color:#000;white-space:nowrap;-webkit-text-stroke:0.22px;">200</div>
<div style="position:absolute;right:474.98px;transform-origin:100% 0;top:220.22px;line-height:16px;font-size:11px;color:#000;white-space:nowrap;-webkit-text-stroke:0.22px;">100</div>
<div style="position:absolute;left:626.38px;transform-origin:0 0;top:120.22px;line-height:16px;font-size:11px;color:#000;white-space:nowrap;-webkit-text-stroke:0.22px;">18 X</div>
<div style="position:absolute;left:626.38px;transform-origin:0 0;top:134.22px;line-height:16px;font-size:11px;color:#000;white-space:nowrap;-webkit-text-stroke:0.22px;">16 X</div>
<div style="position:absolute;left:626.38px;transform-origin:0 0;top:148.22px;line-height:16px;font-size:11px;color:#000;white-space:nowrap;-webkit-text-stroke:0.22px;">14 X</div>
<div style="position:absolute;left:626.38px;transform-origin:0 0;top:162.22px;line-height:16px;font-size:11px;color:#000;white-space:nowrap;-webkit-text-stroke:0.22px;">12 X</div>
<div style="position:absolute;left:626.38px;transform-origin:0 0;top:176.22px;line-height:16px;font-size:11px;color:#000;white-space:nowrap;-webkit-text-stroke:0.22px;">10 X</div>
<div style="position:absolute;left:626.73px;transform-origin:0 0;top:190.22px;line-height:16px;font-size:11px;color:#000;white-space:nowrap;-webkit-text-stroke:0.22px;">8 X</div>
<div style="position:absolute;left:626.65px;transform-origin:0 0;top:204.22px;line-height:16px;font-size:11px;color:#000;white-space:nowrap;-webkit-text-stroke:0.22px;">6 X</div>
<div style="position:absolute;left:626.95px;transform-origin:0 0;top:218.22px;line-height:16px;font-size:11px;color:#000;white-space:nowrap;-webkit-text-stroke:0.22px;">4 X</div>
<div style="position:absolute;left:626.65px;transform-origin:0 0;top:232.22px;line-height:16px;font-size:11px;color:#000;white-space:nowrap;-webkit-text-stroke:0.22px;">2 X</div>
<div style="position:absolute;left:149.42px;width:80px;text-align:center;top:252.22px;line-height:16px;font-size:11px;color:#000;white-space:nowrap;-webkit-text-stroke:0.22px;">0.0</div>
<div style="position:absolute;left:192.62px;width:80px;text-align:center;top:252.22px;line-height:16px;font-size:11px;color:#000;white-space:nowrap;-webkit-text-stroke:0.22px;">2.5</div>
<div style="position:absolute;left:235.82px;width:80px;text-align:center;top:252.22px;line-height:16px;font-size:11px;color:#000;white-space:nowrap;-webkit-text-stroke:0.22px;">5.0</div>
<div style="position:absolute;left:279.02px;width:80px;text-align:center;top:252.22px;line-height:16px;font-size:11px;color:#000;white-space:nowrap;-webkit-text-stroke:0.22px;">7.5</div>
<div style="position:absolute;left:322.22px;width:80px;text-align:center;top:252.22px;line-height:16px;font-size:11px;color:#000;white-space:nowrap;-webkit-text-stroke:0.22px;">10.0</div>
<div style="position:absolute;left:365.42px;width:80px;text-align:center;top:252.22px;line-height:16px;font-size:11px;color:#000;white-space:nowrap;-webkit-text-stroke:0.22px;">12.5</div>
<div style="position:absolute;left:408.62px;width:80px;text-align:center;top:252.22px;line-height:16px;font-size:11px;color:#000;white-space:nowrap;-webkit-text-stroke:0.22px;">15.0</div>
<div style="position:absolute;left:451.82px;width:80px;text-align:center;top:252.22px;line-height:16px;font-size:11px;color:#000;white-space:nowrap;-webkit-text-stroke:0.22px;">17.5</div>
<div style="position:absolute;left:495.02px;width:80px;text-align:center;top:252.22px;line-height:16px;font-size:11px;color:#000;white-space:nowrap;-webkit-text-stroke:0.22px;">20.0</div>
<div style="position:absolute;left:538.22px;width:80px;text-align:center;top:252.22px;line-height:16px;font-size:11px;color:#000;white-space:nowrap;-webkit-text-stroke:0.22px;">22.5</div>
<div style="position:absolute;left:581.42px;width:80px;text-align:center;top:252.22px;line-height:16px;font-size:11px;color:#000;white-space:nowrap;-webkit-text-stroke:0.22px;">25.0 GB</div>
<div style="position:absolute;left:191px;top:117px;width:6px;height:8px;background:#008000;"></div>
<div style="position:absolute;left:200.21px;transform-origin:0 0;top:113.56px;line-height:16px;font-size:10px;color:#000;white-space:nowrap;-webkit-text-stroke:0.22px;transform:scaleX(0.9880);">LDC</div>
<div style="position:absolute;left:223px;top:117px;width:6px;height:8px;background:#87cefa;"></div>
<div style="position:absolute;left:231.63px;transform-origin:0 0;top:113.56px;line-height:16px;font-size:10px;color:#000;white-space:nowrap;-webkit-text-stroke:0.22px;transform:scaleX(1.0819);">Read speed</div>
<div style="position:absolute;left:293px;top:117px;width:6px;height:8px;background:#ff80e8;"></div>
<div style="position:absolute;left:302.47px;transform-origin:0 0;top:113.56px;line-height:16px;font-size:10px;color:#000;white-space:nowrap;-webkit-text-stroke:0.22px;transform:scaleX(1.0814);">Write speed</div>
<svg style="left:0;top:0" width="661" height="524" viewBox="0 0 661 524">
<defs><linearGradient id="pg2" x1="0" y1="0" x2="0" y2="1"><stop offset="0" stop-color="#4e5e86"/><stop offset="1" stop-color="#7c88ae"/></linearGradient></defs>
<rect x="189" y="283" width="435" height="127" fill="url(#pg2)"/>
<rect x="198" y="284" width="1" height="125" fill="#4a4a4f"/>
<rect x="207" y="284" width="1" height="125" fill="#4a4a4f"/>
<rect x="215" y="284" width="1" height="125" fill="#4a4a4f"/>
<rect x="224" y="284" width="1" height="125" fill="#4a4a4f"/>
<rect x="232.92" y="284" width="1.16" height="125" fill="#1c1c22"/>
<rect x="241" y="284" width="1" height="125" fill="#4a4a4f"/>
<rect x="250" y="284" width="1" height="125" fill="#4a4a4f"/>
<rect x="259" y="284" width="1" height="125" fill="#4a4a4f"/>
<rect x="267" y="284" width="1" height="125" fill="#4a4a4f"/>
<rect x="275.92" y="284" width="1.16" height="125" fill="#1c1c22"/>
<rect x="285" y="284" width="1" height="125" fill="#4a4a4f"/>
<rect x="293" y="284" width="1" height="125" fill="#4a4a4f"/>
<rect x="302" y="284" width="1" height="125" fill="#4a4a4f"/>
<rect x="310" y="284" width="1" height="125" fill="#4a4a4f"/>
<rect x="318.92" y="284" width="1.16" height="125" fill="#1c1c22"/>
<rect x="328" y="284" width="1" height="125" fill="#4a4a4f"/>
<rect x="336" y="284" width="1" height="125" fill="#4a4a4f"/>
<rect x="345" y="284" width="1" height="125" fill="#4a4a4f"/>
<rect x="354" y="284" width="1" height="125" fill="#4a4a4f"/>
<rect x="361.92" y="284" width="1.16" height="125" fill="#1c1c22"/>
<rect x="371" y="284" width="1" height="125" fill="#4a4a4f"/>
<rect x="380" y="284" width="1" height="125" fill="#4a4a4f"/>
<rect x="388" y="284" width="1" height="125" fill="#4a4a4f"/>
<rect x="397" y="284" width="1" height="125" fill="#4a4a4f"/>
<rect x="405.92" y="284" width="1.16" height="125" fill="#1c1c22"/>
<rect x="414" y="284" width="1" height="125" fill="#4a4a4f"/>
<rect x="423" y="284" width="1" height="125" fill="#4a4a4f"/>
<rect x="431" y="284" width="1" height="125" fill="#4a4a4f"/>
<rect x="440" y="284" width="1" height="125" fill="#4a4a4f"/>
<rect x="448.92" y="284" width="1.16" height="125" fill="#1c1c22"/>
<rect x="457" y="284" width="1" height="125" fill="#4a4a4f"/>
<rect x="466" y="284" width="1" height="125" fill="#4a4a4f"/>
<rect x="475" y="284" width="1" height="125" fill="#4a4a4f"/>
<rect x="483" y="284" width="1" height="125" fill="#4a4a4f"/>
<rect x="491.92" y="284" width="1.16" height="125" fill="#1c1c22"/>
<rect x="501" y="284" width="1" height="125" fill="#4a4a4f"/>
<rect x="509" y="284" width="1" height="125" fill="#4a4a4f"/>
<rect x="518" y="284" width="1" height="125" fill="#4a4a4f"/>
<rect x="526" y="284" width="1" height="125" fill="#4a4a4f"/>
<rect x="534.92" y="284" width="1.16" height="125" fill="#1c1c22"/>
<rect x="544" y="284" width="1" height="125" fill="#4a4a4f"/>
<rect x="552" y="284" width="1" height="125" fill="#4a4a4f"/>
<rect x="561" y="284" width="1" height="125" fill="#4a4a4f"/>
<rect x="570" y="284" width="1" height="125" fill="#4a4a4f"/>
<rect x="577.92" y="284" width="1.16" height="125" fill="#1c1c22"/>
<rect x="587" y="284" width="1" height="125" fill="#4a4a4f"/>
<rect x="596" y="284" width="1" height="125" fill="#4a4a4f"/>
<rect x="604" y="284" width="1" height="125" fill="#4a4a4f"/>
<rect x="613" y="284" width="1" height="125" fill="#4a4a4f"/>
<rect x="190" y="316" width="433" height="1" fill="#25252b"/>
<rect x="190" y="347" width="433" height="1" fill="#25252b"/>
<rect x="190" y="378" width="433" height="1" fill="#25252b"/>
<rect x="189" y="409" width="435" height="1" fill="#000"/>
<rect x="592" y="285" width="1.2" height="88" fill="#44ccf8"/>
<path d="M191 410V378.1h1V410zM198 410V390.7h1V410zM204 410V390.7h1V410zM217 410V390.7h1V410zM221 410V396.9h1V410zM222 410V390.7h1V410zM236 410V390.7h1V410zM241 410V396.9h1V410zM242 410V396.9h1V410zM245 410V371.9h1V410zM247 410V390.7h1V410zM253 410V390.7h1V410zM254 410V390.7h1V410zM255 410V390.7h1V410zM261 410V390.7h1V410zM285 410V396.9h1V410zM298 410V390.7h1V410zM305 410V384.4h1V410zM307 410V384.4h1V410zM312 410V371.9h1V410zM329 410V371.9h1V410zM340 410V378.1h1V410zM349 410V371.9h1V410zM360 410V371.9h1V410zM365 410V371.9h1V410zM370 410V365.6h1V410zM384 410V384.4h1V410zM390 410V384.4h1V410zM394 410V384.4h1V410zM398 410V384.4h1V410zM457 410V371.9h1V410zM503 410V390.7h1V410zM512 410V396.9h1V410zM522 410V396.9h1V410zM528 410V390.7h1V410zM532 410V396.9h1V410zM535 410V396.9h1V410zM538 410V384.4h1V410zM539 410V396.9h1V410zM549 410V384.4h1V410zM552 410V396.9h1V410zM556 410V390.7h1V410zM563 410V396.9h1V410zM573 410V390.7h1V410zM585 410V371.9h1V410z" fill="#38c509"/>
<path d="M192 410V390.7h1V410zM197 410V390.7h1V410zM201 410V390.7h1V410zM209 410V371.9h1V410zM210 410V384.4h1V410zM212 410V384.4h1V410zM215 410V396.9h1V410zM218 410V390.7h1V410zM224 410V371.9h1V410zM226 410V396.9h1V410zM232 410V396.9h1V410zM239 410V390.7h1V410zM256 410V396.9h1V410zM259 410V390.7h1V410zM262 410V396.9h1V410zM263 410V396.9h1V410zM270 410V396.9h1V410zM272 410V390.7h1V410zM295 410V390.7h1V410zM296 410V384.4h1V410zM304 410V390.7h1V410zM316 410V378.1h1V410zM341 410V378.1h1V410zM382 410V384.4h1V410zM387 410V384.4h1V410zM391 410V378.1h1V410zM392 410V378.1h1V410zM397 410V384.4h1V410zM399 410V384.4h1V410zM495 410V384.4h1V410zM505 410V396.9h1V410zM510 410V396.9h1V410zM519 410V396.9h1V410zM523 410V396.9h1V410zM524 410V396.9h1V410zM527 410V396.9h1V410zM541 410V396.9h1V410zM545 410V390.7h1V410zM547 410V396.9h1V410zM559 410V390.7h1V410zM564 410V396.9h1V410zM566 410V396.9h1V410zM567 410V396.9h1V410zM568 410V396.9h1V410zM575 410V390.7h1V410zM577 410V378.1h1V410z" fill="#2dc50a"/>
<path d="M193 410V390.7h1V410zM196 410V390.7h1V410zM208 410V390.7h1V410zM211 410V390.7h1V410zM213 410V390.7h1V410zM214 410V390.7h1V410zM227 410V390.7h1V410zM228 410V390.7h1V410zM235 410V384.4h1V410zM237 410V390.7h1V410zM240 410V390.7h1V410zM243 410V390.7h1V410zM251 410V396.9h1V410zM252 410V390.7h1V410zM258 410V396.9h1V410zM267 410V390.7h1V410zM269 410V396.9h1V410zM273 410V390.7h1V410zM277 410V390.7h1V410zM279 410V390.7h1V410zM281 410V396.9h1V410zM287 410V396.9h1V410zM288 410V390.7h1V410zM292 410V390.7h1V410zM297 410V390.7h1V410zM306 410V384.4h1V410zM385 410V384.4h1V410zM386 410V384.4h1V410zM389 410V384.4h1V410zM401 410V378.1h1V410zM491 410V378.1h1V410zM507 410V390.7h1V410zM517 410V396.9h1V410zM520 410V396.9h1V410zM521 410V390.7h1V410zM533 410V396.9h1V410zM534 410V396.9h1V410zM537 410V390.7h1V410zM540 410V396.9h1V410zM543 410V390.7h1V410zM562 410V396.9h1V410zM572 410V390.7h1V410zM576 410V390.7h1V410z" fill="#23c50b"/>
<path d="M194 410V390.7h1V410zM195 410V390.7h1V410zM202 410V390.7h1V410zM229 410V390.7h1V410zM233 410V384.4h1V410zM257 410V390.7h1V410zM260 410V390.7h1V410zM264 410V378.1h1V410zM275 410V378.1h1V410zM283 410V365.6h1V410zM290 410V390.7h1V410zM291 410V390.7h1V410zM294 410V396.9h1V410zM300 410V390.7h1V410zM301 410V390.7h1V410zM302 410V390.7h1V410zM311 410V384.4h1V410zM317 410V384.4h1V410zM319 410V378.1h1V410zM323 410V371.9h1V410zM324 410V365.6h1V410zM328 410V378.1h1V410zM334 410V371.9h1V410zM335 410V378.1h1V410zM336 410V371.9h1V410zM337 410V371.9h1V410zM338 410V371.9h1V410zM339 410V371.9h1V410zM342 410V378.1h1V410zM343 410V378.1h1V410zM352 410V378.1h1V410zM356 410V371.9h1V410zM357 410V365.6h1V410zM367 410V371.9h1V410zM369 410V371.9h1V410zM375 410V378.1h1V410zM381 410V384.4h1V410zM402 410V365.6h1V410zM405 410V365.6h1V410zM407 410V365.6h1V410zM445 410V365.6h1V410zM453 410V365.6h1V410zM459 410V365.6h1V410zM490 410V378.1h1V410zM493 410V378.1h1V410zM497 410V378.1h1V410zM498 410V371.9h1V410zM499 410V365.6h1V410zM504 410V396.9h1V410zM508 410V390.7h1V410zM525 410V390.7h1V410zM529 410V390.7h1V410zM544 410V390.7h1V410zM550 410V396.9h1V410zM558 410V390.7h1V410zM570 410V390.7h1V410zM578 410V378.1h1V410zM584 410V365.6h1V410zM587 410V359.3h1V410zM592 410V365.6h1V410z" fill="#42c508"/>
<path d="M199 410V384.4h1V410zM206 410V390.7h1V410zM225 410V390.7h1V410zM268 410V390.7h1V410zM278 410V390.7h1V410zM282 410V390.7h1V410zM284 410V359.3h1V410zM303 410V384.4h1V410zM309 410V378.1h1V410zM313 410V384.4h1V410zM315 410V371.9h1V410zM321 410V371.9h1V410zM322 410V378.1h1V410zM330 410V371.9h1V410zM333 410V365.6h1V410zM345 410V371.9h1V410zM347 410V359.3h1V410zM351 410V378.1h1V410zM361 410V371.9h1V410zM362 410V365.6h1V410zM368 410V359.3h1V410zM376 410V378.1h1V410zM388 410V378.1h1V410zM395 410V384.4h1V410zM396 410V384.4h1V410zM403 410V365.6h1V410zM410 410V353.0h1V410zM448 410V371.9h1V410zM451 410V365.6h1V410zM454 410V365.6h1V410zM460 410V365.6h1V410zM492 410V378.1h1V410zM496 410V371.9h1V410zM500 410V371.9h1V410zM501 410V371.9h1V410zM514 410V371.9h1V410zM526 410V390.7h1V410zM554 410V390.7h1V410zM583 410V359.3h1V410zM591 410V365.6h1V410z" fill="#4dc507"/>
<path d="M200 410V390.7h1V410zM203 410V390.7h1V410zM205 410V390.7h1V410zM216 410V390.7h1V410zM223 410V396.9h1V410zM231 410V396.9h1V410zM244 410V390.7h1V410zM250 410V396.9h1V410zM265 410V390.7h1V410zM266 410V396.9h1V410zM271 410V390.7h1V410zM274 410V390.7h1V410zM276 410V390.7h1V410zM289 410V390.7h1V410zM293 410V396.9h1V410zM299 410V390.7h1V410zM308 410V384.4h1V410zM400 410V384.4h1V410zM502 410V396.9h1V410zM511 410V396.9h1V410zM516 410V396.9h1V410zM530 410V390.7h1V410zM531 410V396.9h1V410zM551 410V396.9h1V410zM553 410V390.7h1V410zM557 410V390.7h1V410zM561 410V390.7h1V410zM565 410V396.9h1V410zM569 410V396.9h1V410zM571 410V390.7h1V410zM574 410V390.7h1V410z" fill="#18c50c"/>
<path d="M207 410V396.9h1V410zM219 410V396.9h1V410zM220 410V396.9h1V410zM249 410V396.9h1V410zM280 410V396.9h1V410zM286 410V396.9h1V410zM506 410V396.9h1V410zM509 410V396.9h1V410zM513 410V396.9h1V410zM515 410V396.9h1V410zM518 410V396.9h1V410zM536 410V390.7h1V410zM542 410V396.9h1V410zM546 410V396.9h1V410zM555 410V396.9h1V410zM560 410V396.9h1V410z" fill="#0ec60e"/>
<path d="M230 410V378.1h1V410zM234 410V384.4h1V410zM238 410V384.4h1V410zM248 410V371.9h1V410zM310 410V378.1h1V410zM318 410V378.1h1V410zM320 410V378.1h1V410zM326 410V371.9h1V410zM327 410V378.1h1V410zM344 410V353.0h1V410zM346 410V359.3h1V410zM354 410V378.1h1V410zM355 410V371.9h1V410zM363 410V371.9h1V410zM364 410V371.9h1V410zM372 410V353.0h1V410zM373 410V371.9h1V410zM374 410V371.9h1V410zM377 410V371.9h1V410zM378 410V378.1h1V410zM380 410V378.1h1V410zM404 410V365.6h1V410zM406 410V365.6h1V410zM420 410V346.8h1V410zM440 410V359.3h1V410zM441 410V353.0h1V410zM443 410V353.0h1V410zM444 410V365.6h1V410zM446 410V359.3h1V410zM447 410V359.3h1V410zM449 410V371.9h1V410zM450 410V365.6h1V410zM456 410V371.9h1V410zM462 410V365.6h1V410zM463 410V365.6h1V410zM464 410V359.3h1V410zM466 410V359.3h1V410zM467 410V359.3h1V410zM469 410V359.3h1V410zM475 410V353.0h1V410zM481 410V353.0h1V410zM483 410V365.6h1V410zM494 410V378.1h1V410zM548 410V384.4h1V410zM579 410V378.1h1V410zM580 410V378.1h1V410zM586 410V365.6h1V410zM590 410V371.9h1V410z" fill="#57c405"/>
<path d="M246 410V365.6h1V410zM314 410V365.6h1V410zM325 410V371.9h1V410zM353 410V359.3h1V410zM371 410V365.6h1V410zM379 410V359.3h1V410zM393 410V359.3h1V410zM409 410V353.0h1V410zM412 410V353.0h1V410zM415 410V346.8h1V410zM417 410V346.8h1V410zM419 410V340.5h1V410zM427 410V334.2h1V410zM430 410V353.0h1V410zM436 410V340.5h1V410zM442 410V353.0h1V410zM458 410V365.6h1V410zM461 410V365.6h1V410zM465 410V359.3h1V410zM468 410V359.3h1V410zM477 410V346.8h1V410zM478 410V340.5h1V410zM486 410V365.6h1V410zM488 410V353.0h1V410zM581 410V365.6h1V410zM589 410V353.0h1V410z" fill="#6cc403"/>
<path d="M331 410V365.6h1V410zM348 410V371.9h1V410zM358 410V371.9h1V410zM359 410V365.6h1V410zM366 410V371.9h1V410zM408 410V353.0h1V410zM414 410V353.0h1V410zM416 410V346.8h1V410zM422 410V346.8h1V410zM434 410V353.0h1V410zM437 410V346.8h1V410zM452 410V365.6h1V410zM455 410V353.0h1V410zM471 410V346.8h1V410zM472 410V346.8h1V410zM484 410V359.3h1V410zM485 410V365.6h1V410zM489 410V359.3h1V410z" fill="#62c404"/>
<path d="M332 410V365.6h1V410zM350 410V353.0h1V410zM383 410V359.3h1V410zM411 410V353.0h1V410zM418 410V346.8h1V410zM425 410V346.8h1V410zM426 410V346.8h1V410zM438 410V359.3h1V410zM439 410V359.3h1V410zM470 410V353.0h1V410zM474 410V346.8h1V410zM479 410V353.0h1V410zM482 410V359.3h1V410zM582 410V365.6h1V410z" fill="#77c402"/>
<path d="M413 410V346.8h1V410zM421 410V346.8h1V410zM423 410V340.5h1V410zM424 410V346.8h1V410zM428 410V346.8h1V410zM429 410V340.5h1V410zM431 410V340.5h1V410zM473 410V340.5h1V410z" fill="#8cc400"/>
<path d="M432 410V340.5h1V410zM433 410V346.8h1V410zM435 410V327.9h1V410zM476 410V353.0h1V410zM480 410V359.3h1V410zM487 410V359.3h1V410zM588 410V353.0h1V410z" fill="#81c401"/>
<path d="M191 338h1v1h-1zM192 336h1v2h-1zM193 337h1v2h-1zM194 339h1v2h-1zM195 338h1v2h-1zM196 335h1v3h-1zM197 336h1v5h-1zM198 338h1v2h-1zM199 336h1v2h-1zM200 337h1v2h-1zM201 339h1v2h-1zM202 338h1v2h-1zM203 335h1v3h-1zM204 336h1v4h-1zM205 340h1v1h-1zM206 336h1v4h-1zM207 337h1v1h-1zM208 338h1v3h-1zM209 338h1v2h-1zM210 334h1v4h-1zM211 335h1v4h-1zM212 338h1v1h-1zM213 338h1v1h-1zM214 338h1v1h-1zM215 339h1v1h-1zM216 340h1v2h-1zM217 340h1v1h-1zM218 339h1v1h-1zM219 340h1v2h-1zM220 339h1v2h-1zM221 335h1v4h-1zM222 336h1v3h-1zM223 339h1v3h-1zM224 336h1v5h-1zM225 337h1v5h-1zM226 338h1v3h-1zM227 336h1v2h-1zM228 337h1v3h-1zM229 338h1v1h-1zM230 336h1v2h-1zM231 337h1v3h-1zM232 340h1v2h-1zM233 339h1v2h-1zM234 335h1v4h-1zM235 336h1v3h-1zM236 339h1v1h-1zM237 338h1v1h-1zM238 339h1v1h-1zM239 340h1v2h-1zM240 339h1v2h-1zM241 335h1v4h-1zM242 336h1v5h-1zM243 341h1v1h-1zM244 340h1v1h-1zM245 336h1v4h-1zM246 337h1v3h-1zM247 340h1v2h-1zM248 339h1v2h-1zM249 337h1v2h-1zM250 338h1v2h-1zM251 340h1v2h-1zM252 339h1v2h-1zM253 336h1v3h-1zM254 337h1v2h-1zM255 339h1v3h-1zM256 336h1v5h-1zM257 336h1v1h-1zM258 337h1v5h-1zM259 338h1v3h-1zM260 338h1v1h-1zM261 339h1v3h-1zM262 339h1v2h-1zM263 335h1v4h-1zM264 336h1v5h-1zM265 339h1v1h-1zM266 336h1v3h-1zM267 337h1v3h-1zM268 340h1v2h-1zM269 339h1v2h-1zM270 336h1v3h-1zM271 337h1v3h-1zM272 340h1v2h-1zM273 338h1v3h-1zM274 335h1v3h-1zM275 336h1v3h-1zM276 339h1v3h-1zM277 335h1v6h-1zM278 336h1v3h-1zM279 339h1v3h-1zM280 338h1v3h-1zM281 336h1v2h-1zM282 337h1v3h-1zM283 340h1v2h-1zM284 337h1v4h-1zM285 338h1v2h-1zM286 340h1v2h-1zM287 338h1v3h-1zM288 331h1v7h-1zM289 332h1v10h-1zM290 339h1v2h-1zM291 336h1v3h-1zM292 337h1v3h-1zM293 340h1v2h-1zM294 338h1v3h-1zM295 339h1v1h-1zM296 340h1v2h-1zM297 339h1v2h-1zM298 338h1v1h-1zM299 339h1v3h-1zM300 337h1v4h-1zM301 338h1v2h-1zM302 340h1v1h-1zM303 338h1v2h-1zM304 337h1v1h-1zM305 338h1v1h-1zM306 339h1v2h-1zM307 338h1v2h-1zM308 336h1v2h-1zM309 337h1v2h-1zM310 339h1v2h-1zM311 338h1v2h-1zM312 334h1v4h-1zM313 335h1v4h-1zM314 339h1v2h-1zM315 338h1v2h-1zM316 337h1v1h-1zM317 337h1v1h-1zM318 338h1v3h-1zM319 339h1v1h-1zM320 336h1v3h-1zM321 335h1v1h-1zM322 336h1v5h-1zM323 338h1v2h-1zM324 335h1v3h-1zM325 336h1v3h-1zM326 339h1v2h-1zM327 339h1v1h-1zM328 337h1v2h-1zM329 338h1v1h-1zM330 339h1v2h-1zM331 338h1v2h-1zM332 338h1v1h-1zM333 339h1v2h-1zM334 339h1v1h-1zM335 338h1v1h-1zM336 339h1v2h-1zM337 339h1v1h-1zM338 338h1v1h-1zM339 339h1v1h-1zM340 337h1v2h-1zM341 338h1v3h-1zM342 339h1v1h-1zM343 337h1v2h-1zM344 338h1v2h-1zM345 340h1v1h-1zM346 338h1v2h-1zM347 335h1v3h-1zM348 336h1v2h-1zM349 338h1v3h-1zM350 339h1v1h-1zM351 335h1v4h-1zM352 336h1v4h-1zM353 340h1v1h-1zM354 339h1v1h-1zM355 331h1v8h-1zM356 332h1v8h-1zM357 340h1v1h-1zM358 336h1v4h-1zM359 335h1v1h-1zM360 336h1v4h-1zM361 339h1v1h-1zM362 340h1v1h-1zM363 338h1v2h-1zM364 337h1v1h-1zM365 338h1v2h-1zM366 340h1v1h-1zM367 338h1v2h-1zM368 335h1v3h-1zM369 336h1v3h-1zM370 339h1v2h-1zM371 338h1v2h-1zM372 335h1v3h-1zM373 336h1v4h-1zM374 338h1v1h-1zM375 337h1v1h-1zM376 338h1v1h-1zM377 339h1v2h-1zM378 338h1v2h-1zM379 335h1v3h-1zM380 336h1v2h-1zM381 338h1v3h-1zM382 338h1v2h-1zM383 337h1v1h-1zM384 338h1v1h-1zM385 339h1v2h-1zM386 338h1v2h-1zM387 338h1v1h-1zM388 339h1v2h-1zM389 339h1v1h-1zM390 337h1v2h-1zM391 338h1v2h-1zM392 340h1v1h-1zM393 339h1v1h-1zM394 335h1v4h-1zM395 336h1v2h-1zM396 338h1v3h-1zM397 337h1v3h-1zM398 338h1v1h-1zM399 339h1v2h-1zM400 335h1v5h-1zM401 336h1v1h-1zM402 337h1v2h-1zM403 339h1v2h-1zM404 338h1v2h-1zM405 339h1v1h-1zM406 340h1v1h-1zM407 338h1v2h-1zM408 335h1v3h-1zM409 336h1v5h-1zM410 338h1v2h-1zM411 336h1v2h-1zM412 337h1v4h-1zM413 338h1v2h-1zM414 336h1v2h-1zM415 337h1v2h-1zM416 339h1v2h-1zM417 338h1v2h-1zM418 335h1v3h-1zM419 336h1v5h-1zM420 335h1v5h-1zM421 336h1v3h-1zM422 338h1v1h-1zM423 337h1v1h-1zM424 338h1v2h-1zM425 340h1v1h-1zM426 336h1v4h-1zM427 337h1v4h-1zM428 337h1v3h-1zM429 337h1v1h-1zM430 338h1v3h-1zM431 338h1v2h-1zM432 338h1v1h-1zM433 339h1v2h-1zM434 337h1v3h-1zM435 338h1v1h-1zM436 339h1v2h-1zM437 338h1v2h-1zM438 335h1v3h-1zM439 336h1v3h-1zM440 339h1v2h-1zM441 338h1v2h-1zM442 337h1v1h-1zM443 338h1v2h-1zM444 338h1v1h-1zM445 336h1v2h-1zM446 337h1v2h-1zM447 339h1v2h-1zM448 338h1v2h-1zM449 333h1v5h-1zM450 334h1v7h-1zM451 338h1v2h-1zM452 338h1v1h-1zM453 339h1v2h-1zM454 338h1v2h-1zM455 337h1v1h-1zM456 338h1v1h-1zM457 339h1v2h-1zM458 337h1v3h-1zM459 337h1v1h-1zM460 338h1v1h-1zM461 338h1v1h-1zM462 335h1v3h-1zM463 336h1v3h-1zM464 336h1v2h-1zM465 337h1v1h-1zM466 338h1v3h-1zM467 338h1v2h-1zM468 338h1v1h-1zM469 339h1v2h-1zM470 338h1v2h-1zM471 335h1v3h-1zM472 336h1v4h-1zM473 340h1v1h-1zM474 339h1v1h-1zM475 335h1v4h-1zM476 336h1v4h-1zM477 340h1v1h-1zM478 338h1v2h-1zM479 336h1v2h-1zM480 337h1v5h-1zM481 340h1v1h-1zM482 337h1v3h-1zM483 338h1v2h-1zM484 340h1v2h-1zM485 339h1v2h-1zM486 339h1v1h-1zM487 339h1v1h-1zM488 332h1v7h-1zM489 333h1v7h-1zM490 340h1v2h-1zM491 339h1v2h-1zM492 335h1v4h-1zM493 336h1v4h-1zM494 340h1v2h-1zM495 336h1v5h-1zM496 337h1v3h-1zM497 340h1v2h-1zM498 340h1v1h-1zM499 336h1v4h-1zM500 337h1v3h-1zM501 340h1v2h-1zM502 339h1v2h-1zM503 338h1v1h-1zM504 339h1v3h-1zM505 340h1v1h-1zM506 338h1v2h-1zM507 339h1v1h-1zM508 336h1v3h-1zM509 337h1v2h-1zM510 339h1v3h-1zM511 339h1v2h-1zM512 336h1v3h-1zM513 337h1v3h-1zM514 340h1v2h-1zM515 336h1v5h-1zM516 337h1v3h-1zM517 339h1v1h-1zM518 340h1v1h-1zM519 341h1v1h-1zM520 340h1v1h-1zM521 338h1v2h-1zM522 339h1v3h-1zM523 340h1v1h-1zM524 339h1v1h-1zM525 339h1v1h-1zM526 338h1v1h-1zM527 338h1v1h-1zM528 339h1v3h-1zM529 336h1v5h-1zM530 337h1v4h-1zM531 341h1v1h-1zM532 339h1v2h-1zM533 337h1v2h-1zM534 338h1v2h-1zM535 340h1v2h-1zM536 339h1v2h-1zM537 336h1v3h-1zM538 337h1v5h-1zM539 340h1v1h-1zM540 337h1v3h-1zM541 338h1v2h-1zM542 340h1v2h-1zM543 331h1v10h-1zM544 332h1v8h-1zM545 340h1v2h-1zM546 339h1v2h-1zM547 338h1v1h-1zM548 339h1v1h-1zM549 339h1v1h-1zM550 338h1v1h-1zM551 339h1v2h-1zM552 341h1v1h-1zM553 338h1v3h-1zM554 339h1v1h-1zM555 340h1v1h-1zM556 336h1v4h-1zM557 337h1v3h-1zM558 340h1v2h-1zM559 340h1v1h-1zM560 340h1v1h-1zM561 341h1v1h-1zM562 339h1v2h-1zM563 339h1v1h-1zM564 340h1v2h-1zM565 340h1v1h-1zM566 340h1v1h-1zM567 341h1v1h-1zM568 338h1v3h-1zM569 339h1v1h-1zM570 340h1v2h-1zM571 340h1v1h-1zM572 337h1v3h-1zM573 338h1v3h-1zM574 341h1v1h-1zM575 339h1v2h-1zM576 338h1v1h-1zM577 337h1v1h-1zM578 338h1v4h-1zM579 339h1v2h-1zM580 340h1v1h-1zM581 341h1v1h-1zM582 337h1v4h-1zM583 338h1v1h-1zM584 338h1v1h-1zM585 335h1v3h-1zM586 336h1v3h-1zM587 335h1v3h-1zM588 336h1v2h-1zM589 332h1v5h-1zM590 333h1v1h-1zM591 334h1v1h-1z" fill="#e4aadc" shape-rendering="crispEdges"/>
<rect x="189" y="283" width="2" height="127" fill="#000"/>
<rect x="622" y="283" width="2" height="127" fill="#000"/>
<rect x="189" y="283" width="435" height="2" fill="#000"/>
<rect x="186" y="284" width="3" height="1" fill="#000"/>
<rect x="186" y="316" width="3" height="1" fill="#000"/>
<rect x="186" y="347" width="3" height="1" fill="#000"/>
<rect x="186" y="378" width="3" height="1" fill="#000"/>
<rect x="233" y="410" width="1" height="1" fill="#000"/>
<rect x="276" y="410" width="1" height="1" fill="#000"/>
<rect x="319" y="410" width="1" height="1" fill="#000"/>
<rect x="362" y="410" width="1" height="1" fill="#000"/>
<rect x="406" y="410" width="1" height="1" fill="#000"/>
<rect x="449" y="410" width="1" height="1" fill="#000"/>
<rect x="492" y="410" width="1" height="1" fill="#000"/>
<rect x="535" y="410" width="1" height="1" fill="#000"/>
<rect x="578" y="410" width="1" height="1" fill="#000"/>
</svg>
<div style="position:absolute;right:474.96px;transform-origin:100% 0;top:276.22px;line-height:16px;font-size:11px;color:#000;white-space:nowrap;-webkit-text-stroke:0.22px;">20</div>
<div style="position:absolute;right:474.93px;transform-origin:100% 0;top:308.02px;line-height:16px;font-size:11px;color:#000;white-space:nowrap;-webkit-text-stroke:0.22px;">15</div>
<div style="position:absolute;right:474.96px;transform-origin:100% 0;top:339.22px;line-height:16px;font-size:11px;color:#000;white-space:nowrap;-webkit-text-stroke:0.22px;">10</div>
<div style="position:absolute;right:474.95px;transform-origin:100% 0;top:370.22px;line-height:16px;font-size:11px;color:#000;white-space:nowrap;-webkit-text-stroke:0.22px;">5</div>
<div style="position:absolute;left:626.65px;transform-origin:0 0;top:276.22px;line-height:16px;font-size:11px;color:#000;white-space:nowrap;-webkit-text-stroke:0.22px;">20%</div>
<div style="position:absolute;left:626.38px;transform-origin:0 0;top:301.22px;line-height:16px;font-size:11px;color:#000;white-space:nowrap;-webkit-text-stroke:0.22px;">16%</div>
<div style="position:absolute;left:626.38px;transform-origin:0 0;top:326.22px;line-height:16px;font-size:11px;color:#000;white-space:nowrap;-webkit-text-stroke:0.22px;">12%</div>
<div style="position:absolute;left:626.73px;transform-origin:0 0;top:351.22px;line-height:16px;font-size:11px;color:#000;white-space:nowrap;-webkit-text-stroke:0.22px;">8%</div>
<div style="position:absolute;left:626.95px;transform-origin:0 0;top:376.22px;line-height:16px;font-size:11px;color:#000;white-space:nowrap;-webkit-text-stroke:0.22px;">4%</div>
<div style="position:absolute;left:149.42px;width:80px;text-align:center;top:408.22px;line-height:16px;font-size:11px;color:#000;white-space:nowrap;-webkit-text-stroke:0.22px;">0.0</div>
<div style="position:absolute;left:192.62px;width:80px;text-align:center;top:408.22px;line-height:16px;font-size:11px;color:#000;white-space:nowrap;-webkit-text-stroke:0.22px;">2.5</div>
<div style="position:absolute;left:235.82px;width:80px;text-align:center;top:408.22px;line-height:16px;font-size:11px;color:#000;white-space:nowrap;-webkit-text-stroke:0.22px;">5.0</div>
<div style="position:absolute;left:279.02px;width:80px;text-align:center;top:408.22px;line-height:16px;font-size:11px;color:#000;white-space:nowrap;-webkit-text-stroke:0.22px;">7.5</div>
<div style="position:absolute;left:322.22px;width:80px;text-align:center;top:408.22px;line-height:16px;font-size:11px;color:#000;white-space:nowrap;-webkit-text-stroke:0.22px;">10.0</div>
<div style="position:absolute;left:365.42px;width:80px;text-align:center;top:408.22px;line-height:16px;font-size:11px;color:#000;white-space:nowrap;-webkit-text-stroke:0.22px;">12.5</div>
<div style="position:absolute;left:408.62px;width:80px;text-align:center;top:408.22px;line-height:16px;font-size:11px;color:#000;white-space:nowrap;-webkit-text-stroke:0.22px;">15.0</div>
<div style="position:absolute;left:451.82px;width:80px;text-align:center;top:408.22px;line-height:16px;font-size:11px;color:#000;white-space:nowrap;-webkit-text-stroke:0.22px;">17.5</div>
<div style="position:absolute;left:495.02px;width:80px;text-align:center;top:408.22px;line-height:16px;font-size:11px;color:#000;white-space:nowrap;-webkit-text-stroke:0.22px;">20.0</div>
<div style="position:absolute;left:538.22px;width:80px;text-align:center;top:408.22px;line-height:16px;font-size:11px;color:#000;white-space:nowrap;-webkit-text-stroke:0.22px;">22.5</div>
<div style="position:absolute;left:581.42px;width:80px;text-align:center;top:408.22px;line-height:16px;font-size:11px;color:#000;white-space:nowrap;-webkit-text-stroke:0.22px;">25.0 GB</div>
<div style="position:absolute;left:191px;top:273px;width:6px;height:8px;background:#008000;"></div>
<div style="position:absolute;left:200.20px;transform-origin:0 0;top:269.56px;line-height:16px;font-size:10px;color:#000;white-space:nowrap;-webkit-text-stroke:0.22px;transform:scaleX(0.9950);">BIS</div>
<div style="position:absolute;left:219px;top:273px;width:6px;height:8px;background:#d4a0d4;"></div>
<div style="position:absolute;left:228.25px;transform-origin:0 0;top:269.56px;line-height:16px;font-size:10px;color:#000;white-space:nowrap;-webkit-text-stroke:0.22px;transform:scaleX(1.0199);">Jitter</div>
<div style="position:absolute;left:255px;top:270px;width:6px;height:3px;background:#000;"></div>
<div style="position:absolute;right:387.99px;transform-origin:100% 0;top:428.11px;line-height:16px;font-size:11.3px;color:#000;white-space:nowrap;-webkit-text-stroke:0.22px;transform:scaleX(0.9637);">LDC</div>
<div style="position:absolute;right:334.11px;transform-origin:100% 0;top:428.11px;line-height:16px;font-size:11.3px;color:#000;white-space:nowrap;-webkit-text-stroke:0.22px;transform:scaleX(0.9816);">BIS</div>
<div style="position:absolute;left:162.60px;transform-origin:0 0;top:445.11px;line-height:16px;font-size:11.3px;color:#000;white-space:nowrap;-webkit-text-stroke:0.22px;transform:scaleX(1.0237);">Avg</div>
<div style="position:absolute;left:161.84px;transform-origin:0 0;top:461.11px;line-height:16px;font-size:11.3px;color:#000;white-space:nowrap;-webkit-text-stroke:0.22px;transform:scaleX(1.0570);">Max</div>
<div style="position:absolute;left:160.76px;transform-origin:0 0;top:477.11px;line-height:16px;font-size:11.3px;color:#000;white-space:nowrap;-webkit-text-stroke:0.22px;transform:scaleX(1.0694);">Total</div>
<div style="position:absolute;right:387.55px;transform-origin:100% 0;top:445.11px;line-height:16px;font-size:11.3px;color:#1414f0;white-space:nowrap;-webkit-text-stroke:0.22px;transform:scaleX(0.9904);">27.45</div>
<div style="position:absolute;right:387.48px;transform-origin:100% 0;top:461.11px;line-height:16px;font-size:11.3px;color:#1414f0;white-space:nowrap;-webkit-text-stroke:0.22px;transform:scaleX(0.9417);">421</div>
<div style="position:absolute;right:387.47px;transform-origin:100% 0;top:477.11px;line-height:16px;font-size:11.3px;color:#1414f0;white-space:nowrap;-webkit-text-stroke:0.22px;">10481829</div>
<div style="position:absolute;right:333.53px;transform-origin:100% 0;top:445.11px;line-height:16px;font-size:11.3px;color:#1414f0;white-space:nowrap;-webkit-text-stroke:0.22px;transform:scaleX(0.9951);">0.48</div>
<div style="position:absolute;right:333.50px;transform-origin:100% 0;top:461.11px;line-height:16px;font-size:11.3px;color:#1414f0;white-space:nowrap;-webkit-text-stroke:0.22px;transform:scaleX(0.9808);">13</div>
<div style="position:absolute;right:333.47px;transform-origin:100% 0;top:477.11px;line-height:16px;font-size:11.3px;color:#1414f0;white-space:nowrap;-webkit-text-stroke:0.22px;transform:scaleX(0.9909);">182169</div>
<div style="position:absolute;left:395px;top:431px;width:13px;height:13px;background:#fff;border:1px solid #333;"></div>
<svg style="left:395px;top:431px" width="13" height="13" viewBox="0 0 13 13"><path d="M2.8 6.4 L5.3 9 L10.3 3.2" stroke="#222" stroke-width="1.1" fill="none"/></svg>
<div style="position:absolute;left:417.12px;transform-origin:0 0;top:429.11px;line-height:16px;font-size:11.3px;color:#000;white-space:nowrap;-webkit-text-stroke:0.22px;transform:scaleX(1.0350);">Jitter</div>
<div style="position:absolute;right:218.12px;transform-origin:100% 0;top:445.11px;line-height:16px;font-size:11.3px;color:#1414f0;white-space:nowrap;-webkit-text-stroke:0.22px;transform:scaleX(0.9842);">11.1%</div>
<div style="position:absolute;right:218.14px;transform-origin:100% 0;top:461.11px;line-height:16px;font-size:11.3px;color:#1414f0;white-space:nowrap;-webkit-text-stroke:0.22px;transform:scaleX(0.9571);">12.7%</div>
<div style="position:absolute;left:460.50px;transform-origin:0 0;top:433.11px;line-height:16px;font-size:11.3px;color:#000;white-space:nowrap;-webkit-text-stroke:0.22px;transform:scaleX(0.9859);">Speed</div>
<div style="position:absolute;left:460.03px;transform-origin:0 0;top:461.11px;line-height:16px;font-size:11.3px;color:#000;white-space:nowrap;-webkit-text-stroke:0.22px;transform:scaleX(1.0754);">Position</div>
<div style="position:absolute;left:460.52px;transform-origin:0 0;top:477.11px;line-height:16px;font-size:11.3px;color:#000;white-space:nowrap;-webkit-text-stroke:0.22px;transform:scaleX(0.9523);">Samples</div>
<div style="position:absolute;left:520.06px;transform-origin:0 0;top:433.11px;line-height:16px;font-size:11.3px;color:#1414f0;white-space:nowrap;-webkit-text-stroke:0.22px;transform:scaleX(0.9315);">4.19 X</div>
<div style="position:absolute;left:519.74px;transform-origin:0 0;top:461.11px;line-height:16px;font-size:11.3px;color:#1414f0;white-space:nowrap;-webkit-text-stroke:0.22px;transform:scaleX(0.9827);">23862 MB</div>
<div style="position:absolute;left:519.89px;transform-origin:0 0;top:477.11px;line-height:16px;font-size:11.3px;color:#1414f0;white-space:nowrap;-webkit-text-stroke:0.22px;transform:scaleX(0.9743);">378944</div>
<div style="position:absolute;left:575px;top:428px;width:75px;height:21px;background:#e1e1e1;border:1px solid #adadad;"></div>
<div style="position:absolute;left:578.76px;transform-origin:0 0;top:431.11px;line-height:16px;font-size:11.3px;color:#000;white-space:nowrap;-webkit-text-stroke:0.22px;transform:scaleX(0.9265);">4.0 X</div>
<svg style="left:636px;top:436px" width="10" height="6" viewBox="0 0 10 6"><path d="M1 0.8 L5 4.8 L9 0.8" stroke="#444" stroke-width="1.05" fill="none"/></svg>
<div style="position:absolute;left:576px;top:452px;width:73px;height:21px;background:#e1e1e1;border:1px solid #adadad;"></div>
<div style="position:absolute;left:589.85px;transform-origin:0 0;top:455.11px;line-height:16px;font-size:11.3px;color:#000;white-space:nowrap;-webkit-text-stroke:0.22px;transform:scaleX(1.0746);">Start full</div>
<div style="position:absolute;left:575px;top:479px;width:73px;height:21px;background:#e1e1e1;border:1px solid #adadad;"></div>
<div style="position:absolute;left:586.47px;transform-origin:0 0;top:482.11px;line-height:16px;font-size:11.3px;color:#000;white-space:nowrap;-webkit-text-stroke:0.22px;transform:scaleX(1.0391);">Start part</div>
</body></html>
